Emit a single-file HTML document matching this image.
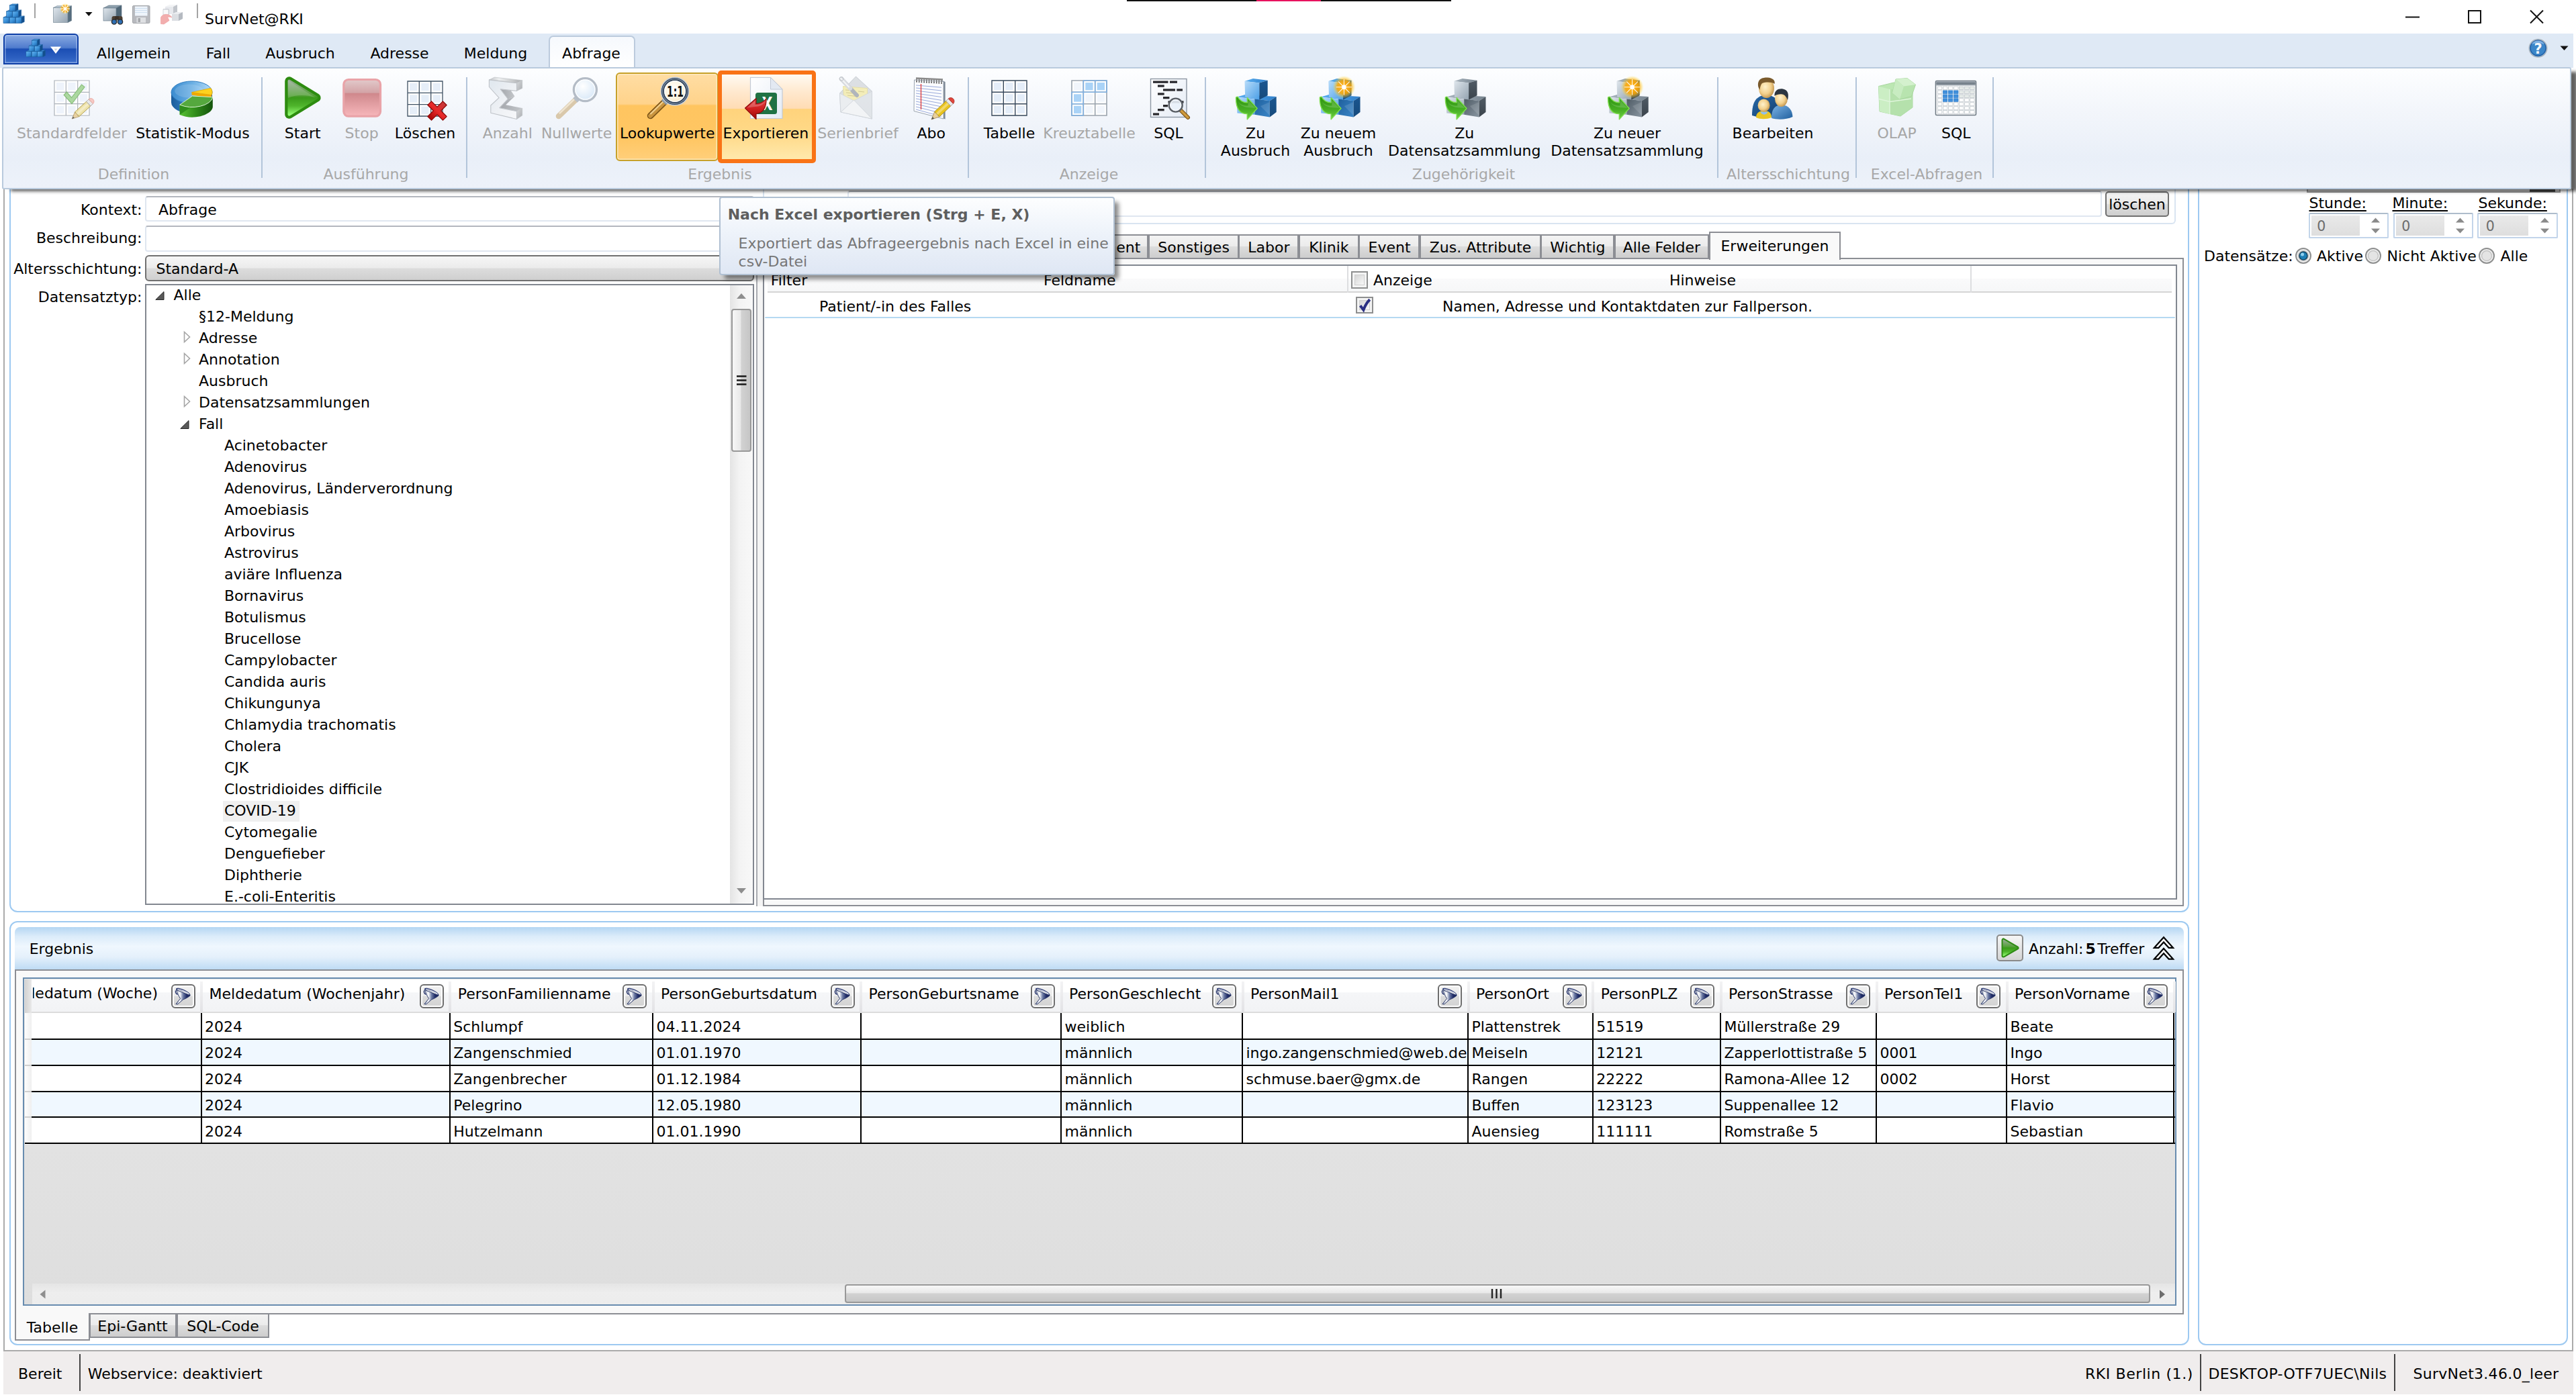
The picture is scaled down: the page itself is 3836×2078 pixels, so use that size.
<!DOCTYPE html>
<html lang="de"><head><meta charset="utf-8"><title>SurvNet@RKI</title>
<style>
html,body{margin:0;padding:0;background:#fff;}
body{width:3836px;height:2078px;position:relative;overflow:hidden;font-family:"DejaVu Sans","Liberation Sans",sans-serif;font-size:22px;color:#000;}
.t{position:absolute;white-space:nowrap;line-height:1;}
div{box-sizing:border-box;}
svg{overflow:visible;}
</style></head><body>
<div style="position:absolute;left:1678.0px;top:0.0px;width:483.0px;height:2.0px;background:#111;"></div>
<div style="position:absolute;left:1871.0px;top:0.0px;width:96.0px;height:2.0px;background:#e8135f;"></div>
<div class="t" style="left:305.0px;top:18.4px;font-size:22px;color:#000;">SurvNet@RKI</div>
<svg style="position:absolute;left:3570.0px;top:5.0px;" width="240" height="40" viewBox="0 0 240 40"><path d="M12 20.5h21" stroke="#111" stroke-width="2" fill="none"/><rect x="106" y="11" width="18" height="18" fill="none" stroke="#111" stroke-width="2"/><path d="M198 10.5l19 19M217 10.5l-19 19" stroke="#111" stroke-width="2" fill="none"/></svg>
<div style="position:absolute;left:5.0px;top:281.0px;width:2.0px;height:1733.0px;background:#ababab;"></div>
<div style="position:absolute;left:3830.0px;top:281.0px;width:2.0px;height:1733.0px;background:#ababab;"></div>
<div style="position:absolute;left:14.0px;top:240.0px;width:3246.0px;height:1118.5px;border:2px solid #9dc9f1;border-radius:12px;background:#fff;"></div>
<div style="position:absolute;left:3273.0px;top:240.0px;width:551.0px;height:1764.0px;border:2px solid #9dc9f1;border-radius:12px;background:#fff;"></div>
<div style="position:absolute;left:14.0px;top:1372.0px;width:3246.0px;height:632.0px;border:2px solid #9dc9f1;border-radius:12px;background:#fff;"></div>
<div class="t" style="left:211.5px;top:302.4px;font-size:22px;color:#000;transform:translateX(-100%);">Kontext:</div>
<div class="t" style="left:211.5px;top:344.0px;font-size:22px;color:#000;transform:translateX(-100%);">Beschreibung:</div>
<div class="t" style="left:211.5px;top:390.0px;font-size:22px;color:#000;transform:translateX(-100%);">Altersschichtung:</div>
<div class="t" style="left:211.5px;top:432.2px;font-size:22px;color:#000;transform:translateX(-100%);">Datensatztyp:</div>
<div style="position:absolute;left:216.0px;top:291.5px;width:907.0px;height:38.5px;border:2px solid #dfe6f0;border-top-color:#b3b7be;border-radius:4px;background:#fff;"></div>
<div class="t" style="left:236.0px;top:302.4px;font-size:22px;color:#000;">Abfrage</div>
<div style="position:absolute;left:216.0px;top:336.0px;width:907.0px;height:38.5px;border:2px solid #dfe6f0;border-top-color:#b3b7be;border-radius:4px;background:#fff;"></div>
<div style="position:absolute;left:216.0px;top:379.5px;width:907.0px;height:39.5px;border:2px solid #707070;border-radius:6px;background:linear-gradient(#f6f6f6 0%,#ebebeb 48%,#dcdcdc 52%,#cfcfcf 100%);"></div>
<div class="t" style="left:232.5px;top:390.0px;font-size:22px;color:#000;">Standard-A</div>
<div style="position:absolute;left:216.0px;top:423.0px;width:907.0px;height:925.0px;border:2px solid #828790;background:#fff;"></div>
<div style="position:absolute;left:1087.0px;top:425.0px;width:34.0px;height:921.0px;background:linear-gradient(90deg,#e4e4e4,#f3f3f3 40%,#f8f8f8);"></div>
<svg style="position:absolute;left:1087.0px;top:425.0px;" width="34" height="921" viewBox="0 0 34 921"><path d="M10 20l7-8 7 8z" fill="#8e8e8e"/><path d="M10 898l7 8 7-8z" fill="#8e8e8e"/></svg>
<div style="position:absolute;left:1089.0px;top:459.5px;width:30.0px;height:213.5px;border:2px solid #989898;border-radius:4px;background:linear-gradient(90deg,#f7f7f7 0%,#e9e9e9 45%,#d2d2d2 50%,#c6c6c6 100%);"></div>
<svg style="position:absolute;left:1096.0px;top:557.0px;" width="16" height="18" viewBox="0 0 16 18"><path d="M1 3.5h14.500M1 9.500h14.500M1 15.500h14.500" stroke="#1a1a1a" stroke-width="2.400"/></svg>
<div class="t" style="left:258.5px;top:428.7px;font-size:22px;color:#000;">Alle</div>
<svg style="position:absolute;left:230.5px;top:434.3px;" width="14" height="13" viewBox="0 0 14 13"><path d="M13 0.5v12H0.8z" fill="#595959" stroke="#262626" stroke-width="1"/></svg>
<div class="t" style="left:296.0px;top:460.7px;font-size:22px;color:#000;">§12-Meldung</div>
<div class="t" style="left:296.0px;top:492.7px;font-size:22px;color:#000;">Adresse</div>
<svg style="position:absolute;left:273.0px;top:493.3px;" width="12" height="18" viewBox="0 0 12 18"><path d="M1.5 1.5l8 7.5-8 7.5z" fill="#fff" stroke="#a5a5a5" stroke-width="1.6"/></svg>
<div class="t" style="left:296.0px;top:524.7px;font-size:22px;color:#000;">Annotation</div>
<svg style="position:absolute;left:273.0px;top:525.3px;" width="12" height="18" viewBox="0 0 12 18"><path d="M1.5 1.5l8 7.5-8 7.5z" fill="#fff" stroke="#a5a5a5" stroke-width="1.6"/></svg>
<div class="t" style="left:296.0px;top:556.7px;font-size:22px;color:#000;">Ausbruch</div>
<div class="t" style="left:296.0px;top:588.7px;font-size:22px;color:#000;">Datensatzsammlungen</div>
<svg style="position:absolute;left:273.0px;top:589.3px;" width="12" height="18" viewBox="0 0 12 18"><path d="M1.5 1.5l8 7.5-8 7.5z" fill="#fff" stroke="#a5a5a5" stroke-width="1.6"/></svg>
<div class="t" style="left:296.0px;top:620.7px;font-size:22px;color:#000;">Fall</div>
<svg style="position:absolute;left:268.0px;top:626.3px;" width="14" height="13" viewBox="0 0 14 13"><path d="M13 0.5v12H0.8z" fill="#595959" stroke="#262626" stroke-width="1"/></svg>
<div class="t" style="left:334.0px;top:652.7px;font-size:22px;color:#000;">Acinetobacter</div>
<div class="t" style="left:334.0px;top:684.7px;font-size:22px;color:#000;">Adenovirus</div>
<div class="t" style="left:334.0px;top:716.7px;font-size:22px;color:#000;">Adenovirus, Länderverordnung</div>
<div class="t" style="left:334.0px;top:748.7px;font-size:22px;color:#000;">Amoebiasis</div>
<div class="t" style="left:334.0px;top:780.7px;font-size:22px;color:#000;">Arbovirus</div>
<div class="t" style="left:334.0px;top:812.7px;font-size:22px;color:#000;">Astrovirus</div>
<div class="t" style="left:334.0px;top:844.7px;font-size:22px;color:#000;">aviäre Influenza</div>
<div class="t" style="left:334.0px;top:876.7px;font-size:22px;color:#000;">Bornavirus</div>
<div class="t" style="left:334.0px;top:908.7px;font-size:22px;color:#000;">Botulismus</div>
<div class="t" style="left:334.0px;top:940.7px;font-size:22px;color:#000;">Brucellose</div>
<div class="t" style="left:334.0px;top:972.7px;font-size:22px;color:#000;">Campylobacter</div>
<div class="t" style="left:334.0px;top:1004.7px;font-size:22px;color:#000;">Candida auris</div>
<div class="t" style="left:334.0px;top:1036.7px;font-size:22px;color:#000;">Chikungunya</div>
<div class="t" style="left:334.0px;top:1068.7px;font-size:22px;color:#000;">Chlamydia trachomatis</div>
<div class="t" style="left:334.0px;top:1100.7px;font-size:22px;color:#000;">Cholera</div>
<div class="t" style="left:334.0px;top:1132.7px;font-size:22px;color:#000;">CJK</div>
<div class="t" style="left:334.0px;top:1164.7px;font-size:22px;color:#000;">Clostridioides difficile</div>
<div style="position:absolute;left:332.0px;top:1193.3px;width:114.0px;height:31.0px;background:#f0f0f0;"></div>
<div class="t" style="left:334.0px;top:1196.7px;font-size:22px;color:#000;">COVID-19</div>
<div class="t" style="left:334.0px;top:1228.7px;font-size:22px;color:#000;">Cytomegalie</div>
<div class="t" style="left:334.0px;top:1260.7px;font-size:22px;color:#000;">Denguefieber</div>
<div class="t" style="left:334.0px;top:1292.7px;font-size:22px;color:#000;">Diphtherie</div>
<div class="t" style="left:334.0px;top:1324.7px;font-size:22px;color:#000;">E.-coli-Enteritis</div>
<div style="position:absolute;left:218.0px;top:1346.0px;width:869.0px;height:2.0px;background:#828790;"></div>
<div style="position:absolute;left:216.0px;top:1348.0px;width:907.0px;height:6.0px;background:#fff;"></div>
<div style="position:absolute;left:1126.0px;top:300.0px;width:2.0px;height:1050.0px;background:#a9abb0;"></div>
<div style="position:absolute;left:1128.0px;top:300.0px;width:8.0px;height:1050.0px;background:#f4f4f4;"></div>
<div style="position:absolute;left:1136.0px;top:281.0px;width:2104.0px;height:52.5px;border:2px solid #d9e4f1;border-top:none;border-radius:0 0 6px 6px;background:#fff;"></div>
<div style="position:absolute;left:1262.0px;top:284.0px;width:1868.0px;height:38.5px;border:2px solid #dfe6f0;border-top-color:#b3b7be;border-radius:4px;background:#fff;"></div>
<div style="position:absolute;left:3135.0px;top:285.0px;width:95.0px;height:37.5px;border:2px solid #707070;border-radius:5px;background:linear-gradient(#f3f3f3 0%,#ebebeb 48%,#dddddd 52%,#cfcfcf 100%);"></div>
<div class="t" style="left:3182.5px;top:294.4px;font-size:22px;color:#000;transform:translateX(-50%);">löschen</div>
<div style="position:absolute;left:1136.0px;top:383.5px;width:2116.0px;height:966.5px;border:2px solid #8c8e94;background:#f9f9f9;"></div>
<div style="position:absolute;left:1599.2px;top:349.0px;width:111.3px;height:36.5px;border:2px solid #8c8e94;background:linear-gradient(#f3f3f3 0%,#ebebeb 50%,#dddddd 50%,#cdcdcd 100%);"></div>
<div class="t" style="left:1698.3px;top:358.4px;font-size:22px;color:#000;transform:translateX(-100%);">ent</div>
<div style="position:absolute;left:1710.0px;top:349.0px;width:134.7px;height:36.5px;border:2px solid #8c8e94;background:linear-gradient(#f3f3f3 0%,#ebebeb 50%,#dddddd 50%,#cdcdcd 100%);"></div>
<div class="t" style="left:1777.6px;top:358.4px;font-size:22px;color:#000;transform:translateX(-50%);">Sonstiges</div>
<div style="position:absolute;left:1844.2px;top:349.0px;width:89.9px;height:36.5px;border:2px solid #8c8e94;background:linear-gradient(#f3f3f3 0%,#ebebeb 50%,#dddddd 50%,#cdcdcd 100%);"></div>
<div class="t" style="left:1889.4px;top:358.4px;font-size:22px;color:#000;transform:translateX(-50%);">Labor</div>
<div style="position:absolute;left:1933.6px;top:349.0px;width:90.1px;height:36.5px;border:2px solid #8c8e94;background:linear-gradient(#f3f3f3 0%,#ebebeb 50%,#dddddd 50%,#cdcdcd 100%);"></div>
<div class="t" style="left:1978.9px;top:358.4px;font-size:22px;color:#000;transform:translateX(-50%);">Klinik</div>
<div style="position:absolute;left:2023.2px;top:349.0px;width:91.3px;height:36.5px;border:2px solid #8c8e94;background:linear-gradient(#f3f3f3 0%,#ebebeb 50%,#dddddd 50%,#cdcdcd 100%);"></div>
<div class="t" style="left:2069.1px;top:358.4px;font-size:22px;color:#000;transform:translateX(-50%);">Event</div>
<div style="position:absolute;left:2114.0px;top:349.0px;width:180.7px;height:36.5px;border:2px solid #8c8e94;background:linear-gradient(#f3f3f3 0%,#ebebeb 50%,#dddddd 50%,#cdcdcd 100%);"></div>
<div class="t" style="left:2204.6px;top:358.4px;font-size:22px;color:#000;transform:translateX(-50%);">Zus. Attribute</div>
<div style="position:absolute;left:2294.2px;top:349.0px;width:110.0px;height:36.5px;border:2px solid #8c8e94;background:linear-gradient(#f3f3f3 0%,#ebebeb 50%,#dddddd 50%,#cdcdcd 100%);"></div>
<div class="t" style="left:2349.4px;top:358.4px;font-size:22px;color:#000;transform:translateX(-50%);">Wichtig</div>
<div style="position:absolute;left:2403.7px;top:349.0px;width:141.0px;height:36.5px;border:2px solid #8c8e94;background:linear-gradient(#f3f3f3 0%,#ebebeb 50%,#dddddd 50%,#cdcdcd 100%);"></div>
<div class="t" style="left:2474.4px;top:358.4px;font-size:22px;color:#000;transform:translateX(-50%);">Alle Felder</div>
<div style="position:absolute;left:2545.0px;top:344.5px;width:196.0px;height:42.0px;border:2px solid #8c8e94;border-bottom:none;background:#f9f9f9;"></div>
<div class="t" style="left:2643.0px;top:356.4px;font-size:22px;color:#000;transform:translateX(-50%);">Erweiterungen</div>
<div style="position:absolute;left:1136.0px;top:394.0px;width:2106.0px;height:946.0px;border:2px solid #828790;background:#fff;"></div>
<div style="position:absolute;left:1143.0px;top:396.0px;width:2091.0px;height:40.0px;background:linear-gradient(#ffffff 0%,#ffffff 50%,#fafafb 51%,#f6f7f8 100%);border-bottom:2px solid #d5d5d5;"></div>
<div style="position:absolute;left:2006.0px;top:396.0px;width:2.0px;height:40.0px;background:#dddee0;"></div>
<div style="position:absolute;left:2934.0px;top:396.0px;width:2.0px;height:40.0px;background:#dddee0;"></div>
<div class="t" style="left:1147.7px;top:406.9px;font-size:22px;color:#000;">Filter</div>
<div class="t" style="left:1554.0px;top:406.9px;font-size:22px;color:#000;">Feldname</div>
<div class="t" style="left:2045.0px;top:406.9px;font-size:22px;color:#000;">Anzeige</div>
<div class="t" style="left:2535.5px;top:406.9px;font-size:22px;color:#000;transform:translateX(-50%);">Hinweise</div>
<div style="position:absolute;left:2011.5px;top:404.0px;width:25.5px;height:25.5px;border:2px solid #8e8f8f;background:#f4f4f4;"><div style="position:absolute;left:3px;top:3px;right:3px;bottom:3px;border:1.5px solid #cfcfcf;background:linear-gradient(135deg,#d6d6d6,#f8f8f8);"></div></div>
<div class="t" style="left:1220.0px;top:445.9px;font-size:22px;color:#000;">Patient/-in des Falles</div>
<div style="position:absolute;left:2019.0px;top:441.5px;width:25.5px;height:25.5px;border:2px solid #8e8f8f;background:#f4f4f4;"><div style="position:absolute;left:3px;top:3px;right:3px;bottom:3px;border:1.5px solid #cfcfcf;background:linear-gradient(135deg,#d6d6d6,#f8f8f8);"></div></div>
<svg style="position:absolute;left:2019.0px;top:441.5px;" width="26" height="26" viewBox="0 0 26 26"><path d="M6.600 13.200l4.800 6.400C14 12.500 17 8 20.800 4.300" fill="none" stroke="#2a2f83" stroke-width="4" stroke-linejoin="miter"/></svg>
<div class="t" style="left:2148.0px;top:445.9px;font-size:22px;color:#000;">Namen, Adresse und Kontaktdaten zur Fallperson.</div>
<div style="position:absolute;left:1139.0px;top:471.5px;width:2100.0px;height:2.0px;background:#b5d9f2;border-radius:2px;"></div>
<div style="position:absolute;left:3434.5px;top:262.0px;width:378.0px;height:24.5px;background:#d6d6d6;border:2px solid #9a9a9a;"></div>
<div style="position:absolute;left:3766.5px;top:270.0px;width:38.0px;height:15.5px;background:#484848;"></div>
<div class="t" style="left:3438.5px;top:291.9px;font-size:22px;color:#000;text-decoration:underline;text-decoration-thickness:1.6px;text-underline-offset:2.5px;">Stunde:</div>
<div class="t" style="left:3562.5px;top:291.9px;font-size:22px;color:#000;text-decoration:underline;text-decoration-thickness:1.6px;text-underline-offset:2.5px;">Minute:</div>
<div class="t" style="left:3690.5px;top:291.9px;font-size:22px;color:#000;text-decoration:underline;text-decoration-thickness:1.6px;text-underline-offset:2.5px;">Sekunde:</div>
<div style="position:absolute;left:3437.8px;top:316.5px;width:119.6px;height:38.0px;border:2px solid #c3d5ea;border-top-color:#aebccc;background:#fff;border-radius:2px;"></div>
<div style="position:absolute;left:3441.8px;top:320.5px;width:72.0px;height:30.0px;background:linear-gradient(#e9e9e9,#dedede);"></div>
<div class="t" style="left:3450.3px;top:327.2px;font-size:20.5px;color:#6d6d6d;">0</div>
<svg style="position:absolute;left:3529.3px;top:322.0px;" width="18" height="28" viewBox="0 0 18 28"><path d="M2 9.5l6.5-7 6.5 7z" fill="#8a8a8a"/><path d="M2 18.5l6.5 7 6.5-7z" fill="#8a8a8a"/></svg>
<div style="position:absolute;left:3563.7px;top:316.5px;width:119.6px;height:38.0px;border:2px solid #c3d5ea;border-top-color:#aebccc;background:#fff;border-radius:2px;"></div>
<div style="position:absolute;left:3567.7px;top:320.5px;width:72.0px;height:30.0px;background:linear-gradient(#e9e9e9,#dedede);"></div>
<div class="t" style="left:3576.2px;top:327.2px;font-size:20.5px;color:#6d6d6d;">0</div>
<svg style="position:absolute;left:3655.2px;top:322.0px;" width="18" height="28" viewBox="0 0 18 28"><path d="M2 9.5l6.5-7 6.5 7z" fill="#8a8a8a"/><path d="M2 18.5l6.5 7 6.5-7z" fill="#8a8a8a"/></svg>
<div style="position:absolute;left:3689.3px;top:316.5px;width:119.6px;height:38.0px;border:2px solid #c3d5ea;border-top-color:#aebccc;background:#fff;border-radius:2px;"></div>
<div style="position:absolute;left:3693.3px;top:320.5px;width:72.0px;height:30.0px;background:linear-gradient(#e9e9e9,#dedede);"></div>
<div class="t" style="left:3701.8px;top:327.2px;font-size:20.5px;color:#6d6d6d;">0</div>
<svg style="position:absolute;left:3780.8px;top:322.0px;" width="18" height="28" viewBox="0 0 18 28"><path d="M2 9.5l6.5-7 6.5 7z" fill="#8a8a8a"/><path d="M2 18.5l6.5 7 6.5-7z" fill="#8a8a8a"/></svg>
<div class="t" style="left:3282.0px;top:371.4px;font-size:22px;color:#000;">Datensätze:</div>
<svg style="position:absolute;left:3416.5px;top:367.5px;" width="26" height="26" viewBox="0 0 26 26"><circle cx="13" cy="13" r="11" fill="#f1f1f1" stroke="#8e8f8f" stroke-width="2"/><circle cx="13" cy="13" r="7.5" fill="#e4e4e4" stroke="#c5c5c5" stroke-width="1.5"/><circle cx="13" cy="13" r="6" fill="#1e7fb5" stroke="#12425e" stroke-width="1.5"/><circle cx="11.5" cy="11" r="2.5" fill="#8fd0ef"/></svg>
<div class="t" style="left:3450.0px;top:371.4px;font-size:22px;color:#000;">Aktive</div>
<svg style="position:absolute;left:3520.5px;top:367.5px;" width="26" height="26" viewBox="0 0 26 26"><circle cx="13" cy="13" r="11" fill="#f1f1f1" stroke="#8e8f8f" stroke-width="2"/><circle cx="13" cy="13" r="7.5" fill="#e4e4e4" stroke="#c5c5c5" stroke-width="1.5"/></svg>
<div class="t" style="left:3554.5px;top:371.4px;font-size:22px;color:#000;">Nicht Aktive</div>
<svg style="position:absolute;left:3690.0px;top:367.5px;" width="26" height="26" viewBox="0 0 26 26"><circle cx="13" cy="13" r="11" fill="#f1f1f1" stroke="#8e8f8f" stroke-width="2"/><circle cx="13" cy="13" r="7.5" fill="#e4e4e4" stroke="#c5c5c5" stroke-width="1.5"/></svg>
<div class="t" style="left:3723.5px;top:371.4px;font-size:22px;color:#000;">Alle</div>
<div style="position:absolute;left:22.0px;top:1380.5px;width:3230.0px;height:64.0px;border-radius:8px 8px 0 0;background:linear-gradient(#b4d6f3 0%,#dcecfa 22%,#eff7fe 45%,#e4f0fb 70%,#bcdaf4 100%);"></div>
<div class="t" style="left:43.7px;top:1403.1px;font-size:22px;color:#000;">Ergebnis</div>
<div style="position:absolute;left:2973.0px;top:1392.0px;width:39.5px;height:39.5px;border:2px solid #8a8a8a;border-radius:5px;background:linear-gradient(#f6f6f6,#d4d4d4);"></div>
<svg style="position:absolute;left:2973.0px;top:1392.0px;" width="40" height="40" viewBox="0 0 40 40"><defs><linearGradient id="gp" x1="0" y1="0" x2="0" y2="1"><stop offset="0" stop-color="#4aa52f"/><stop offset="1" stop-color="#7ee04f"/></linearGradient></defs><path d="M10.500 8.500v23L30.500 20z" fill="#2e8a14" stroke="#2e8a14" stroke-width="6" stroke-linejoin="round"/><path d="M10.500 8.500v23L30.500 20z" fill="url(#gStart)" stroke="url(#gStart)" stroke-width="2" stroke-linejoin="round"/></svg>
<div class="t" style="left:3021.0px;top:1403.1px;font-size:22px;color:#000;">Anzahl:<b style="margin:0 2.5px 0 3px">5</b>Treffer</div>
<svg style="position:absolute;left:3200.0px;top:1390.0px;" width="44" height="44" viewBox="0 0 44 44"><path d="M8 21.800L22 6.200L36 21.800H29.600L22 13.400L14.400 21.800zM8 38.600L22 23L36 38.600H29.600L22 30.200L14.400 38.600z" fill="#fff" stroke="#000" stroke-width="2.200" stroke-linejoin="miter"/></svg>
<div style="position:absolute;left:22.0px;top:1444.0px;width:3230.0px;height:513.5px;border:2px solid #8c8e94;background:#f9f9f9;"></div>
<div style="position:absolute;left:34.0px;top:1456.0px;width:3206.5px;height:489.0px;border:2px solid #688caf;background:linear-gradient(#e6e6e6,#dedede);"></div>
<div style="position:absolute;left:36.5px;top:1458.5px;width:3202.0px;height:50.0px;background:linear-gradient(#ffffff 0%,#ffffff 38%,#f5f6f8 42%,#f2f3f5 100%);border-bottom:2px solid #dcdcdc;"></div>
<div style="position:absolute;left:36.5px;top:1508.7px;width:3202.0px;height:38.8px;background:#fff;"></div>
<div style="position:absolute;left:36.5px;top:1547.5px;width:3202.0px;height:39.0px;background:#f0f8ff;"></div>
<div style="position:absolute;left:36.5px;top:1586.5px;width:3202.0px;height:39.0px;background:#fff;"></div>
<div style="position:absolute;left:36.5px;top:1625.5px;width:3202.0px;height:38.7px;background:#f0f8ff;"></div>
<div style="position:absolute;left:36.5px;top:1664.2px;width:3202.0px;height:38.8px;background:#fff;"></div>
<div style="position:absolute;left:36.5px;top:1458.5px;width:10.5px;height:246.0px;background:linear-gradient(90deg,#fdfdfd,#efefef);"></div>
<div style="position:absolute;left:36.5px;top:1458.5px;width:10.5px;height:50.0px;background:linear-gradient(90deg,#d2d2d2,#e8e8e8);"></div>
<div style="position:absolute;left:36.5px;top:1546.5px;width:3202.0px;height:2.3px;background:#000;"></div>
<div style="position:absolute;left:36.5px;top:1585.5px;width:3202.0px;height:2.3px;background:#000;"></div>
<div style="position:absolute;left:36.5px;top:1624.5px;width:3202.0px;height:2.3px;background:#000;"></div>
<div style="position:absolute;left:36.5px;top:1663.2px;width:3202.0px;height:2.3px;background:#000;"></div>
<div style="position:absolute;left:36.5px;top:1702.0px;width:3202.0px;height:2.3px;background:#000;"></div>
<div style="position:absolute;left:36.5px;top:1546.5px;width:10.5px;height:2.3px;background:#cfcfcf;"></div>
<div style="position:absolute;left:36.5px;top:1585.5px;width:10.5px;height:2.3px;background:#cfcfcf;"></div>
<div style="position:absolute;left:36.5px;top:1624.5px;width:10.5px;height:2.3px;background:#cfcfcf;"></div>
<div style="position:absolute;left:36.5px;top:1663.2px;width:10.5px;height:2.3px;background:#cfcfcf;"></div>
<div style="position:absolute;left:298.6px;top:1508.7px;width:2.3px;height:195.3px;background:#000;"></div>
<div style="position:absolute;left:298.1px;top:1462.0px;width:4.0px;height:46.0px;background:linear-gradient(#f3f3f4,#e2e2e5);"></div>
<div style="position:absolute;left:668.8px;top:1508.7px;width:2.3px;height:195.3px;background:#000;"></div>
<div style="position:absolute;left:668.3px;top:1462.0px;width:4.0px;height:46.0px;background:linear-gradient(#f3f3f4,#e2e2e5);"></div>
<div style="position:absolute;left:971.0px;top:1508.7px;width:2.3px;height:195.3px;background:#000;"></div>
<div style="position:absolute;left:970.5px;top:1462.0px;width:4.0px;height:46.0px;background:linear-gradient(#f3f3f4,#e2e2e5);"></div>
<div style="position:absolute;left:1280.5px;top:1508.7px;width:2.3px;height:195.3px;background:#000;"></div>
<div style="position:absolute;left:1280.0px;top:1462.0px;width:4.0px;height:46.0px;background:linear-gradient(#f3f3f4,#e2e2e5);"></div>
<div style="position:absolute;left:1579.0px;top:1508.7px;width:2.3px;height:195.3px;background:#000;"></div>
<div style="position:absolute;left:1578.5px;top:1462.0px;width:4.0px;height:46.0px;background:linear-gradient(#f3f3f4,#e2e2e5);"></div>
<div style="position:absolute;left:1849.0px;top:1508.7px;width:2.3px;height:195.3px;background:#000;"></div>
<div style="position:absolute;left:1848.5px;top:1462.0px;width:4.0px;height:46.0px;background:linear-gradient(#f3f3f4,#e2e2e5);"></div>
<div style="position:absolute;left:2185.0px;top:1508.7px;width:2.3px;height:195.3px;background:#000;"></div>
<div style="position:absolute;left:2184.5px;top:1462.0px;width:4.0px;height:46.0px;background:linear-gradient(#f3f3f4,#e2e2e5);"></div>
<div style="position:absolute;left:2370.7px;top:1508.7px;width:2.3px;height:195.3px;background:#000;"></div>
<div style="position:absolute;left:2370.2px;top:1462.0px;width:4.0px;height:46.0px;background:linear-gradient(#f3f3f4,#e2e2e5);"></div>
<div style="position:absolute;left:2561.0px;top:1508.7px;width:2.3px;height:195.3px;background:#000;"></div>
<div style="position:absolute;left:2560.5px;top:1462.0px;width:4.0px;height:46.0px;background:linear-gradient(#f3f3f4,#e2e2e5);"></div>
<div style="position:absolute;left:2793.0px;top:1508.7px;width:2.3px;height:195.3px;background:#000;"></div>
<div style="position:absolute;left:2792.5px;top:1462.0px;width:4.0px;height:46.0px;background:linear-gradient(#f3f3f4,#e2e2e5);"></div>
<div style="position:absolute;left:2987.0px;top:1508.7px;width:2.3px;height:195.3px;background:#000;"></div>
<div style="position:absolute;left:2986.5px;top:1462.0px;width:4.0px;height:46.0px;background:linear-gradient(#f3f3f4,#e2e2e5);"></div>
<div style="position:absolute;left:3236.0px;top:1508.7px;width:2.3px;height:195.3px;background:#000;"></div>
<div style="position:absolute;left:3235.5px;top:1462.0px;width:4.0px;height:46.0px;background:linear-gradient(#f3f3f4,#e2e2e5);"></div>
<svg width="0" height="0" style="position:absolute"><defs><linearGradient id="fg" x1="0" y1="0" x2="1" y2="0"><stop offset="0" stop-color="#9aa5c0"/><stop offset=".28" stop-color="#ffffff"/><stop offset=".5" stop-color="#6f7da6"/><stop offset=".75" stop-color="#1f2b66"/><stop offset="1" stop-color="#1c2860"/></linearGradient><linearGradient id="fr" x1="0" y1="0" x2="1" y2="1"><stop offset="0" stop-color="#eef1f7"/><stop offset="1" stop-color="#7f8db4"/></linearGradient></defs></svg>
<div style="position:absolute;left:48.600px;top:1462px;width:198.900px;height:44px;overflow:hidden;"><div class="t" style="right:12.500px;top:7.2px;font-size:22px;">Meldedatum (Woche)</div></div>
<div style="position:absolute;left:254.6px;top:1466.0px;width:36.0px;height:36.0px;border:2px solid #6f6f6f;border-radius:6px;background:linear-gradient(#f1f1f1 0%,#ebebeb 49%,#dbdbdb 50%,#d3d3d3 100%);box-shadow:inset 0 0 0 2px #fff;"></div>
<svg style="position:absolute;left:254.6px;top:1466.0px;" width="36" height="36" viewBox="0 0 36 36"><path d="M7.300 8.600C9 14 11.500 18 13.500 21.500L7 29.600L9.600 29.900L17.800 22.800C22 21.500 26 19 28.300 16.800Z" fill="url(#fg)" stroke="#1d2a5e" stroke-width=".9" stroke-linejoin="round"/><path d="M7.400 8.300C5.500 5.500 10 4.800 17 7.600C24 10.400 29.500 14.500 28.300 16.800C23 12 14 8.800 7.400 8.300Z" fill="#26346e"/><path d="M9.500 7.400C14 8 22 11 26.600 14.800" stroke="#e8ecf5" stroke-width="1.300" fill="none"/><path d="M6.500 9.500C6 12 7.500 14.500 9.500 15.500" stroke="#26346e" stroke-width="1.200" fill="none"/></svg>
<div class="t" style="left:311.6px;top:1470.2px;font-size:22px;color:#000;">Meldedatum (Wochenjahr)</div>
<div style="position:absolute;left:624.8px;top:1466.0px;width:36.0px;height:36.0px;border:2px solid #6f6f6f;border-radius:6px;background:linear-gradient(#f1f1f1 0%,#ebebeb 49%,#dbdbdb 50%,#d3d3d3 100%);box-shadow:inset 0 0 0 2px #fff;"></div>
<svg style="position:absolute;left:624.8px;top:1466.0px;" width="36" height="36" viewBox="0 0 36 36"><path d="M7.300 8.600C9 14 11.500 18 13.500 21.500L7 29.600L9.600 29.900L17.800 22.800C22 21.500 26 19 28.300 16.800Z" fill="url(#fg)" stroke="#1d2a5e" stroke-width=".9" stroke-linejoin="round"/><path d="M7.400 8.300C5.500 5.500 10 4.800 17 7.600C24 10.400 29.500 14.500 28.300 16.800C23 12 14 8.800 7.400 8.300Z" fill="#26346e"/><path d="M9.500 7.400C14 8 22 11 26.600 14.800" stroke="#e8ecf5" stroke-width="1.300" fill="none"/><path d="M6.500 9.500C6 12 7.500 14.500 9.500 15.500" stroke="#26346e" stroke-width="1.200" fill="none"/></svg>
<div class="t" style="left:681.8px;top:1470.2px;font-size:22px;color:#000;">PersonFamilienname</div>
<div style="position:absolute;left:927.0px;top:1466.0px;width:36.0px;height:36.0px;border:2px solid #6f6f6f;border-radius:6px;background:linear-gradient(#f1f1f1 0%,#ebebeb 49%,#dbdbdb 50%,#d3d3d3 100%);box-shadow:inset 0 0 0 2px #fff;"></div>
<svg style="position:absolute;left:927.0px;top:1466.0px;" width="36" height="36" viewBox="0 0 36 36"><path d="M7.300 8.600C9 14 11.500 18 13.500 21.500L7 29.600L9.600 29.900L17.800 22.800C22 21.500 26 19 28.300 16.800Z" fill="url(#fg)" stroke="#1d2a5e" stroke-width=".9" stroke-linejoin="round"/><path d="M7.400 8.300C5.500 5.500 10 4.800 17 7.600C24 10.400 29.500 14.500 28.300 16.800C23 12 14 8.800 7.400 8.300Z" fill="#26346e"/><path d="M9.500 7.400C14 8 22 11 26.600 14.800" stroke="#e8ecf5" stroke-width="1.300" fill="none"/><path d="M6.500 9.500C6 12 7.500 14.500 9.500 15.500" stroke="#26346e" stroke-width="1.200" fill="none"/></svg>
<div class="t" style="left:984.0px;top:1470.2px;font-size:22px;color:#000;">PersonGeburtsdatum</div>
<div style="position:absolute;left:1236.5px;top:1466.0px;width:36.0px;height:36.0px;border:2px solid #6f6f6f;border-radius:6px;background:linear-gradient(#f1f1f1 0%,#ebebeb 49%,#dbdbdb 50%,#d3d3d3 100%);box-shadow:inset 0 0 0 2px #fff;"></div>
<svg style="position:absolute;left:1236.5px;top:1466.0px;" width="36" height="36" viewBox="0 0 36 36"><path d="M7.300 8.600C9 14 11.500 18 13.500 21.500L7 29.600L9.600 29.900L17.800 22.800C22 21.500 26 19 28.300 16.800Z" fill="url(#fg)" stroke="#1d2a5e" stroke-width=".9" stroke-linejoin="round"/><path d="M7.400 8.300C5.500 5.500 10 4.800 17 7.600C24 10.400 29.500 14.500 28.300 16.800C23 12 14 8.800 7.400 8.300Z" fill="#26346e"/><path d="M9.500 7.400C14 8 22 11 26.600 14.800" stroke="#e8ecf5" stroke-width="1.300" fill="none"/><path d="M6.500 9.500C6 12 7.500 14.500 9.500 15.500" stroke="#26346e" stroke-width="1.200" fill="none"/></svg>
<div class="t" style="left:1293.5px;top:1470.2px;font-size:22px;color:#000;">PersonGeburtsname</div>
<div style="position:absolute;left:1535.0px;top:1466.0px;width:36.0px;height:36.0px;border:2px solid #6f6f6f;border-radius:6px;background:linear-gradient(#f1f1f1 0%,#ebebeb 49%,#dbdbdb 50%,#d3d3d3 100%);box-shadow:inset 0 0 0 2px #fff;"></div>
<svg style="position:absolute;left:1535.0px;top:1466.0px;" width="36" height="36" viewBox="0 0 36 36"><path d="M7.300 8.600C9 14 11.500 18 13.500 21.500L7 29.600L9.600 29.900L17.800 22.800C22 21.500 26 19 28.300 16.800Z" fill="url(#fg)" stroke="#1d2a5e" stroke-width=".9" stroke-linejoin="round"/><path d="M7.400 8.300C5.500 5.500 10 4.800 17 7.600C24 10.400 29.500 14.500 28.300 16.800C23 12 14 8.800 7.400 8.300Z" fill="#26346e"/><path d="M9.500 7.400C14 8 22 11 26.600 14.800" stroke="#e8ecf5" stroke-width="1.300" fill="none"/><path d="M6.500 9.500C6 12 7.500 14.500 9.500 15.500" stroke="#26346e" stroke-width="1.200" fill="none"/></svg>
<div class="t" style="left:1592.0px;top:1470.2px;font-size:22px;color:#000;">PersonGeschlecht</div>
<div style="position:absolute;left:1805.0px;top:1466.0px;width:36.0px;height:36.0px;border:2px solid #6f6f6f;border-radius:6px;background:linear-gradient(#f1f1f1 0%,#ebebeb 49%,#dbdbdb 50%,#d3d3d3 100%);box-shadow:inset 0 0 0 2px #fff;"></div>
<svg style="position:absolute;left:1805.0px;top:1466.0px;" width="36" height="36" viewBox="0 0 36 36"><path d="M7.300 8.600C9 14 11.500 18 13.500 21.500L7 29.600L9.600 29.900L17.800 22.800C22 21.500 26 19 28.300 16.800Z" fill="url(#fg)" stroke="#1d2a5e" stroke-width=".9" stroke-linejoin="round"/><path d="M7.400 8.300C5.500 5.500 10 4.800 17 7.600C24 10.400 29.500 14.500 28.300 16.800C23 12 14 8.800 7.400 8.300Z" fill="#26346e"/><path d="M9.500 7.400C14 8 22 11 26.600 14.800" stroke="#e8ecf5" stroke-width="1.300" fill="none"/><path d="M6.500 9.500C6 12 7.500 14.500 9.500 15.500" stroke="#26346e" stroke-width="1.200" fill="none"/></svg>
<div class="t" style="left:1862.0px;top:1470.2px;font-size:22px;color:#000;">PersonMail1</div>
<div style="position:absolute;left:2141.0px;top:1466.0px;width:36.0px;height:36.0px;border:2px solid #6f6f6f;border-radius:6px;background:linear-gradient(#f1f1f1 0%,#ebebeb 49%,#dbdbdb 50%,#d3d3d3 100%);box-shadow:inset 0 0 0 2px #fff;"></div>
<svg style="position:absolute;left:2141.0px;top:1466.0px;" width="36" height="36" viewBox="0 0 36 36"><path d="M7.300 8.600C9 14 11.500 18 13.500 21.500L7 29.600L9.600 29.900L17.800 22.800C22 21.500 26 19 28.300 16.800Z" fill="url(#fg)" stroke="#1d2a5e" stroke-width=".9" stroke-linejoin="round"/><path d="M7.400 8.300C5.500 5.500 10 4.800 17 7.600C24 10.400 29.500 14.500 28.300 16.800C23 12 14 8.800 7.400 8.300Z" fill="#26346e"/><path d="M9.500 7.400C14 8 22 11 26.600 14.800" stroke="#e8ecf5" stroke-width="1.300" fill="none"/><path d="M6.500 9.500C6 12 7.500 14.500 9.500 15.500" stroke="#26346e" stroke-width="1.200" fill="none"/></svg>
<div class="t" style="left:2198.0px;top:1470.2px;font-size:22px;color:#000;">PersonOrt</div>
<div style="position:absolute;left:2326.7px;top:1466.0px;width:36.0px;height:36.0px;border:2px solid #6f6f6f;border-radius:6px;background:linear-gradient(#f1f1f1 0%,#ebebeb 49%,#dbdbdb 50%,#d3d3d3 100%);box-shadow:inset 0 0 0 2px #fff;"></div>
<svg style="position:absolute;left:2326.7px;top:1466.0px;" width="36" height="36" viewBox="0 0 36 36"><path d="M7.300 8.600C9 14 11.500 18 13.500 21.500L7 29.600L9.600 29.900L17.800 22.800C22 21.500 26 19 28.300 16.800Z" fill="url(#fg)" stroke="#1d2a5e" stroke-width=".9" stroke-linejoin="round"/><path d="M7.400 8.300C5.500 5.500 10 4.800 17 7.600C24 10.400 29.500 14.500 28.300 16.800C23 12 14 8.800 7.400 8.300Z" fill="#26346e"/><path d="M9.500 7.400C14 8 22 11 26.600 14.800" stroke="#e8ecf5" stroke-width="1.300" fill="none"/><path d="M6.500 9.500C6 12 7.500 14.500 9.500 15.500" stroke="#26346e" stroke-width="1.200" fill="none"/></svg>
<div class="t" style="left:2383.7px;top:1470.2px;font-size:22px;color:#000;">PersonPLZ</div>
<div style="position:absolute;left:2517.0px;top:1466.0px;width:36.0px;height:36.0px;border:2px solid #6f6f6f;border-radius:6px;background:linear-gradient(#f1f1f1 0%,#ebebeb 49%,#dbdbdb 50%,#d3d3d3 100%);box-shadow:inset 0 0 0 2px #fff;"></div>
<svg style="position:absolute;left:2517.0px;top:1466.0px;" width="36" height="36" viewBox="0 0 36 36"><path d="M7.300 8.600C9 14 11.500 18 13.500 21.500L7 29.600L9.600 29.900L17.800 22.800C22 21.500 26 19 28.300 16.800Z" fill="url(#fg)" stroke="#1d2a5e" stroke-width=".9" stroke-linejoin="round"/><path d="M7.400 8.300C5.500 5.500 10 4.800 17 7.600C24 10.400 29.500 14.500 28.300 16.800C23 12 14 8.800 7.400 8.300Z" fill="#26346e"/><path d="M9.500 7.400C14 8 22 11 26.600 14.800" stroke="#e8ecf5" stroke-width="1.300" fill="none"/><path d="M6.500 9.500C6 12 7.500 14.500 9.500 15.500" stroke="#26346e" stroke-width="1.200" fill="none"/></svg>
<div class="t" style="left:2574.0px;top:1470.2px;font-size:22px;color:#000;">PersonStrasse</div>
<div style="position:absolute;left:2749.0px;top:1466.0px;width:36.0px;height:36.0px;border:2px solid #6f6f6f;border-radius:6px;background:linear-gradient(#f1f1f1 0%,#ebebeb 49%,#dbdbdb 50%,#d3d3d3 100%);box-shadow:inset 0 0 0 2px #fff;"></div>
<svg style="position:absolute;left:2749.0px;top:1466.0px;" width="36" height="36" viewBox="0 0 36 36"><path d="M7.300 8.600C9 14 11.500 18 13.500 21.500L7 29.600L9.600 29.900L17.800 22.800C22 21.500 26 19 28.300 16.800Z" fill="url(#fg)" stroke="#1d2a5e" stroke-width=".9" stroke-linejoin="round"/><path d="M7.400 8.300C5.500 5.500 10 4.800 17 7.600C24 10.400 29.500 14.500 28.300 16.800C23 12 14 8.800 7.400 8.300Z" fill="#26346e"/><path d="M9.500 7.400C14 8 22 11 26.600 14.800" stroke="#e8ecf5" stroke-width="1.300" fill="none"/><path d="M6.500 9.500C6 12 7.500 14.500 9.500 15.500" stroke="#26346e" stroke-width="1.200" fill="none"/></svg>
<div class="t" style="left:2806.0px;top:1470.2px;font-size:22px;color:#000;">PersonTel1</div>
<div style="position:absolute;left:2943.0px;top:1466.0px;width:36.0px;height:36.0px;border:2px solid #6f6f6f;border-radius:6px;background:linear-gradient(#f1f1f1 0%,#ebebeb 49%,#dbdbdb 50%,#d3d3d3 100%);box-shadow:inset 0 0 0 2px #fff;"></div>
<svg style="position:absolute;left:2943.0px;top:1466.0px;" width="36" height="36" viewBox="0 0 36 36"><path d="M7.300 8.600C9 14 11.500 18 13.500 21.500L7 29.600L9.600 29.900L17.800 22.800C22 21.500 26 19 28.300 16.800Z" fill="url(#fg)" stroke="#1d2a5e" stroke-width=".9" stroke-linejoin="round"/><path d="M7.400 8.300C5.500 5.500 10 4.800 17 7.600C24 10.400 29.500 14.500 28.300 16.800C23 12 14 8.800 7.400 8.300Z" fill="#26346e"/><path d="M9.500 7.400C14 8 22 11 26.600 14.800" stroke="#e8ecf5" stroke-width="1.300" fill="none"/><path d="M6.500 9.500C6 12 7.500 14.500 9.500 15.500" stroke="#26346e" stroke-width="1.200" fill="none"/></svg>
<div class="t" style="left:3000.0px;top:1470.2px;font-size:22px;color:#000;">PersonVorname</div>
<div style="position:absolute;left:3192.0px;top:1466.0px;width:36.0px;height:36.0px;border:2px solid #6f6f6f;border-radius:6px;background:linear-gradient(#f1f1f1 0%,#ebebeb 49%,#dbdbdb 50%,#d3d3d3 100%);box-shadow:inset 0 0 0 2px #fff;"></div>
<svg style="position:absolute;left:3192.0px;top:1466.0px;" width="36" height="36" viewBox="0 0 36 36"><path d="M7.300 8.600C9 14 11.500 18 13.500 21.500L7 29.600L9.600 29.900L17.800 22.800C22 21.500 26 19 28.300 16.800Z" fill="url(#fg)" stroke="#1d2a5e" stroke-width=".9" stroke-linejoin="round"/><path d="M7.400 8.300C5.500 5.500 10 4.800 17 7.600C24 10.400 29.500 14.500 28.300 16.800C23 12 14 8.800 7.400 8.300Z" fill="#26346e"/><path d="M9.500 7.400C14 8 22 11 26.600 14.800" stroke="#e8ecf5" stroke-width="1.300" fill="none"/><path d="M6.500 9.500C6 12 7.500 14.500 9.500 15.500" stroke="#26346e" stroke-width="1.200" fill="none"/></svg>
<div class="t" style="left:305.1px;top:1519.1px;font-size:22px;color:#000;">2024</div>
<div class="t" style="left:675.3px;top:1519.1px;font-size:22px;color:#000;">Schlumpf</div>
<div class="t" style="left:977.5px;top:1519.1px;font-size:22px;color:#000;">04.11.2024</div>
<div class="t" style="left:1585.5px;top:1519.1px;font-size:22px;color:#000;">weiblich</div>
<div class="t" style="left:2191.5px;top:1519.1px;font-size:22px;color:#000;">Plattenstrek</div>
<div class="t" style="left:2377.2px;top:1519.1px;font-size:22px;color:#000;">51519</div>
<div class="t" style="left:2567.5px;top:1519.1px;font-size:22px;color:#000;">Müllerstraße 29</div>
<div class="t" style="left:2993.5px;top:1519.1px;font-size:22px;color:#000;">Beate</div>
<div class="t" style="left:305.1px;top:1557.9px;font-size:22px;color:#000;">2024</div>
<div class="t" style="left:675.3px;top:1557.9px;font-size:22px;color:#000;">Zangenschmied</div>
<div class="t" style="left:977.5px;top:1557.9px;font-size:22px;color:#000;">01.01.1970</div>
<div class="t" style="left:1585.5px;top:1557.9px;font-size:22px;color:#000;">männlich</div>
<div class="t" style="left:1855.5px;top:1557.9px;font-size:22px;color:#000;">ingo.zangenschmied@web.de</div>
<div class="t" style="left:2191.5px;top:1557.9px;font-size:22px;color:#000;">Meiseln</div>
<div class="t" style="left:2377.2px;top:1557.9px;font-size:22px;color:#000;">12121</div>
<div class="t" style="left:2567.5px;top:1557.9px;font-size:22px;color:#000;">Zapperlottistraße 5</div>
<div class="t" style="left:2799.5px;top:1557.9px;font-size:22px;color:#000;">0001</div>
<div class="t" style="left:2993.5px;top:1557.9px;font-size:22px;color:#000;">Ingo</div>
<div class="t" style="left:305.1px;top:1596.9px;font-size:22px;color:#000;">2024</div>
<div class="t" style="left:675.3px;top:1596.9px;font-size:22px;color:#000;">Zangenbrecher</div>
<div class="t" style="left:977.5px;top:1596.9px;font-size:22px;color:#000;">01.12.1984</div>
<div class="t" style="left:1585.5px;top:1596.9px;font-size:22px;color:#000;">männlich</div>
<div class="t" style="left:1855.5px;top:1596.9px;font-size:22px;color:#000;">schmuse.baer@gmx.de</div>
<div class="t" style="left:2191.5px;top:1596.9px;font-size:22px;color:#000;">Rangen</div>
<div class="t" style="left:2377.2px;top:1596.9px;font-size:22px;color:#000;">22222</div>
<div class="t" style="left:2567.5px;top:1596.9px;font-size:22px;color:#000;">Ramona-Allee 12</div>
<div class="t" style="left:2799.5px;top:1596.9px;font-size:22px;color:#000;">0002</div>
<div class="t" style="left:2993.5px;top:1596.9px;font-size:22px;color:#000;">Horst</div>
<div class="t" style="left:305.1px;top:1635.9px;font-size:22px;color:#000;">2024</div>
<div class="t" style="left:675.3px;top:1635.9px;font-size:22px;color:#000;">Pelegrino</div>
<div class="t" style="left:977.5px;top:1635.9px;font-size:22px;color:#000;">12.05.1980</div>
<div class="t" style="left:1585.5px;top:1635.9px;font-size:22px;color:#000;">männlich</div>
<div class="t" style="left:2191.5px;top:1635.9px;font-size:22px;color:#000;">Buffen</div>
<div class="t" style="left:2377.2px;top:1635.9px;font-size:22px;color:#000;">123123</div>
<div class="t" style="left:2567.5px;top:1635.9px;font-size:22px;color:#000;">Suppenallee 12</div>
<div class="t" style="left:2993.5px;top:1635.9px;font-size:22px;color:#000;">Flavio</div>
<div class="t" style="left:305.1px;top:1674.6px;font-size:22px;color:#000;">2024</div>
<div class="t" style="left:675.3px;top:1674.6px;font-size:22px;color:#000;">Hutzelmann</div>
<div class="t" style="left:977.5px;top:1674.6px;font-size:22px;color:#000;">01.01.1990</div>
<div class="t" style="left:1585.5px;top:1674.6px;font-size:22px;color:#000;">männlich</div>
<div class="t" style="left:2191.5px;top:1674.6px;font-size:22px;color:#000;">Auensieg</div>
<div class="t" style="left:2377.2px;top:1674.6px;font-size:22px;color:#000;">111111</div>
<div class="t" style="left:2567.5px;top:1674.6px;font-size:22px;color:#000;">Romstraße 5</div>
<div class="t" style="left:2993.5px;top:1674.6px;font-size:22px;color:#000;">Sebastian</div>
<div style="position:absolute;left:47.5px;top:1911.5px;width:3191.0px;height:31.5px;background:linear-gradient(#e5e5e5,#eeeeee 45%,#ececec);"></div>
<svg style="position:absolute;left:47.5px;top:1911.5px;" width="40" height="32" viewBox="0 0 40 32"><path d="M19.5 9.5v13l-8-6.5z" fill="#8e8e8e"/></svg>
<svg style="position:absolute;left:3205.0px;top:1911.5px;" width="32" height="32" viewBox="0 0 32 32"><path d="M11 9.5v13l8-6.5z" fill="#6e6e6e"/></svg>
<div style="position:absolute;left:1258.0px;top:1913.0px;width:1944.0px;height:28.0px;border:2px solid #989898;border-radius:4px;background:linear-gradient(#f7f7f7 0%,#e9e9e9 45%,#d2d2d2 50%,#c6c6c6 100%);"></div>
<svg style="position:absolute;left:2219.0px;top:1919.0px;" width="20" height="16" viewBox="0 0 20 16"><path d="M3 1v14M9.5 1v14M16 1v14" stroke="#222" stroke-width="2.4"/></svg>
<div style="position:absolute;left:133.0px;top:1955.5px;width:129.5px;height:37.5px;border:2px solid #8c8e94;background:linear-gradient(#f3f3f3 0%,#ebebeb 50%,#dddddd 50%,#cdcdcd 100%);"></div>
<div class="t" style="left:197.5px;top:1965.4px;font-size:22px;color:#000;transform:translateX(-50%);">Epi-Gantt</div>
<div style="position:absolute;left:263.0px;top:1955.5px;width:138.0px;height:37.5px;border:2px solid #8c8e94;background:linear-gradient(#f3f3f3 0%,#ebebeb 50%,#dddddd 50%,#cdcdcd 100%);"></div>
<div class="t" style="left:332.0px;top:1965.4px;font-size:22px;color:#000;transform:translateX(-50%);">SQL-Code</div>
<div style="position:absolute;left:22.0px;top:1955.5px;width:112.0px;height:41.5px;border:2px solid #8c8e94;border-top:none;background:#f9f9f9;"></div>
<div class="t" style="left:78.0px;top:1967.4px;font-size:22px;color:#000;transform:translateX(-50%);">Tabelle</div>
<div style="position:absolute;left:5.0px;top:2011.0px;width:3827.0px;height:66.0px;background:#f0eded;border-top:2px solid #ababab;"></div>
<div class="t" style="left:27.0px;top:2036.4px;font-size:22px;color:#000;">Bereit</div>
<div style="position:absolute;left:118.0px;top:2017.0px;width:2.0px;height:55.0px;background:#444;"></div>
<div class="t" style="left:130.7px;top:2036.4px;font-size:22px;color:#000;">Webservice: deaktiviert</div>
<div class="t" style="left:3105.0px;top:2036.4px;font-size:22px;color:#000;letter-spacing:0.58px;">RKI Berlin (1.)</div>
<div style="position:absolute;left:3276.0px;top:2017.0px;width:2.0px;height:55.0px;background:#444;"></div>
<div class="t" style="left:3288.4px;top:2036.4px;font-size:22px;color:#000;letter-spacing:0.3px;">DESKTOP-OTF7UEC\Nils</div>
<div style="position:absolute;left:3565.0px;top:2017.0px;width:2.0px;height:55.0px;background:#444;"></div>
<div class="t" style="left:3593.5px;top:2036.4px;font-size:22px;color:#000;letter-spacing:0.28px;">SurvNet3.46.0_leer</div>
<div style="position:absolute;left:0.0px;top:50.0px;width:3832.0px;height:51.0px;background:#dfe9f5;"></div>
<div style="position:absolute;left:5.0px;top:50.0px;width:112.0px;height:46.0px;border:2px solid #0d3ea6;border-radius:6px 6px 0 0;background:linear-gradient(#89aae2 0%,#4f7bcd 46%,#1b4eb4 50%,#2c5fc0 80%,#3d70cc 100%);box-shadow:inset 0 0 0 1.5px rgba(190,210,245,.55);"></div>
<div class="t" style="left:199.0px;top:69.4px;font-size:22px;color:#000;transform:translateX(-50%);">Allgemein</div>
<div class="t" style="left:325.0px;top:69.4px;font-size:22px;color:#000;transform:translateX(-50%);">Fall</div>
<div class="t" style="left:447.0px;top:69.4px;font-size:22px;color:#000;transform:translateX(-50%);">Ausbruch</div>
<div class="t" style="left:595.0px;top:69.4px;font-size:22px;color:#000;transform:translateX(-50%);">Adresse</div>
<div class="t" style="left:738.0px;top:69.4px;font-size:22px;color:#000;transform:translateX(-50%);">Meldung</div>
<div style="position:absolute;left:817.0px;top:52.5px;width:129.0px;height:49.0px;border:2px solid #bccbdd;border-bottom:none;border-radius:7px 7px 0 0;background:linear-gradient(#f6f9fd,#ffffff);"></div>
<div class="t" style="left:880.5px;top:69.4px;font-size:22px;color:#000;transform:translateX(-50%);">Abfrage</div>
<div style="position:absolute;left:3.0px;top:99.5px;width:3826.0px;height:182.5px;border:2px solid #b9cadd;border-radius:3px;background:linear-gradient(#fdfeff 0%,#f3f6fb 35%,#e9eff8 75%,#edf2fa 100%);box-shadow:11px 5px 5px -2px rgba(0,0,0,.62);"></div>
<div style="position:absolute;left:389.0px;top:115.0px;width:2.0px;height:150.0px;background:#b3c5da;"></div>
<div style="position:absolute;left:693.7px;top:115.0px;width:2.0px;height:150.0px;background:#b3c5da;"></div>
<div style="position:absolute;left:1440.8px;top:115.0px;width:2.0px;height:150.0px;background:#b3c5da;"></div>
<div style="position:absolute;left:1793.8px;top:115.0px;width:2.0px;height:150.0px;background:#b3c5da;"></div>
<div style="position:absolute;left:2556.5px;top:115.0px;width:2.0px;height:150.0px;background:#b3c5da;"></div>
<div style="position:absolute;left:2762.5px;top:115.0px;width:2.0px;height:150.0px;background:#b3c5da;"></div>
<div style="position:absolute;left:2966.5px;top:115.0px;width:2.0px;height:150.0px;background:#b3c5da;"></div>
<div class="t" style="left:199.0px;top:248.9px;font-size:22px;color:#a8a8a8;transform:translateX(-50%);">Definition</div>
<div class="t" style="left:545.0px;top:248.9px;font-size:22px;color:#a8a8a8;transform:translateX(-50%);">Ausführung</div>
<div class="t" style="left:1072.0px;top:248.9px;font-size:22px;color:#a8a8a8;transform:translateX(-50%);">Ergebnis</div>
<div class="t" style="left:1621.5px;top:248.9px;font-size:22px;color:#a8a8a8;transform:translateX(-50%);">Anzeige</div>
<div class="t" style="left:2179.5px;top:248.9px;font-size:22px;color:#a8a8a8;transform:translateX(-50%);">Zugehörigkeit</div>
<div class="t" style="left:2663.0px;top:248.9px;font-size:22px;color:#a8a8a8;transform:translateX(-50%);">Altersschichtung</div>
<div class="t" style="left:2869.0px;top:248.9px;font-size:22px;color:#a8a8a8;transform:translateX(-50%);">Excel-Abfragen</div>
<div style="position:absolute;left:917.0px;top:108.0px;width:153.0px;height:132.0px;border:2px solid #c7a12a;border-radius:6px;background:linear-gradient(#ffdda3 0%,#ffd38b 35%,#ffc560 37%,#ffc663 75%,#ffcf7a 100%);box-shadow:inset 0 0 0 1.5px rgba(255,238,200,.8);"></div>
<div style="position:absolute;left:1069.0px;top:105.0px;width:145.5px;height:137.5px;border:6px solid #f97316;border-radius:5px;background:linear-gradient(#fffaf2 0%,#ffe9cf 20%,#ffdcb4 40%,#ffd37c 41%,#ffd988 70%,#ffe9ac 100%);"></div>
<div class="t" style="left:107.0px;top:188.4px;font-size:22px;color:#a6a6a6;transform:translateX(-50%);">Standardfelder</div>
<div class="t" style="left:287.0px;top:188.4px;font-size:22px;color:#000;transform:translateX(-50%);">Statistik-Modus</div>
<div class="t" style="left:450.7px;top:188.4px;font-size:22px;color:#000;transform:translateX(-50%);">Start</div>
<div class="t" style="left:538.6px;top:188.4px;font-size:22px;color:#a6a6a6;transform:translateX(-50%);">Stop</div>
<div class="t" style="left:633.0px;top:188.4px;font-size:22px;color:#000;transform:translateX(-50%);">Löschen</div>
<div class="t" style="left:755.8px;top:188.4px;font-size:22px;color:#a6a6a6;transform:translateX(-50%);">Anzahl</div>
<div class="t" style="left:858.6px;top:188.4px;font-size:22px;color:#a6a6a6;transform:translateX(-50%);">Nullwerte</div>
<div class="t" style="left:993.7px;top:188.4px;font-size:22px;color:#000;transform:translateX(-50%);">Lookupwerte</div>
<div class="t" style="left:1140.4px;top:188.4px;font-size:22px;color:#000;transform:translateX(-50%);">Exportieren</div>
<div class="t" style="left:1277.5px;top:188.4px;font-size:22px;color:#a6a6a6;transform:translateX(-50%);">Serienbrief</div>
<div class="t" style="left:1386.8px;top:188.4px;font-size:22px;color:#000;transform:translateX(-50%);">Abo</div>
<div class="t" style="left:1503.0px;top:188.4px;font-size:22px;color:#000;transform:translateX(-50%);">Tabelle</div>
<div class="t" style="left:1622.0px;top:188.4px;font-size:22px;color:#a6a6a6;transform:translateX(-50%);">Kreuztabelle</div>
<div class="t" style="left:1740.0px;top:188.4px;font-size:22px;color:#000;transform:translateX(-50%);">SQL</div>
<div class="t" style="left:1869.6px;top:188.4px;font-size:22px;color:#000;transform:translateX(-50%);">Zu</div>
<div class="t" style="left:1869.6px;top:214.4px;font-size:22px;color:#000;transform:translateX(-50%);">Ausbruch</div>
<div class="t" style="left:1993.0px;top:188.4px;font-size:22px;color:#000;transform:translateX(-50%);">Zu neuem</div>
<div class="t" style="left:1993.0px;top:214.4px;font-size:22px;color:#000;transform:translateX(-50%);">Ausbruch</div>
<div class="t" style="left:2180.8px;top:188.4px;font-size:22px;color:#000;transform:translateX(-50%);">Zu</div>
<div class="t" style="left:2180.8px;top:214.4px;font-size:22px;color:#000;transform:translateX(-50%);">Datensatzsammlung</div>
<div class="t" style="left:2423.0px;top:188.4px;font-size:22px;color:#000;transform:translateX(-50%);">Zu neuer</div>
<div class="t" style="left:2423.0px;top:214.4px;font-size:22px;color:#000;transform:translateX(-50%);">Datensatzsammlung</div>
<div class="t" style="left:2640.0px;top:188.4px;font-size:22px;color:#000;transform:translateX(-50%);">Bearbeiten</div>
<div class="t" style="left:2824.7px;top:188.4px;font-size:22px;color:#a6a6a6;transform:translateX(-50%);">OLAP</div>
<div class="t" style="left:2912.8px;top:188.4px;font-size:22px;color:#000;transform:translateX(-50%);">SQL</div>
<svg style="position:absolute;left:0;top:0;" width="3836" height="300" viewBox="0 0 3836 300"><defs>
<linearGradient id="gStart" x1="0" y1="0" x2="0" y2="1"><stop offset="0" stop-color="#93aa90"/><stop offset=".42" stop-color="#55a03a"/><stop offset=".5" stop-color="#3a9a1a"/><stop offset=".75" stop-color="#4fb52c"/><stop offset="1" stop-color="#8df86c"/></linearGradient>
<linearGradient id="gStop" x1="0" y1="0" x2="0" y2="1"><stop offset="0" stop-color="#e2cacb"/><stop offset=".36" stop-color="#d3a3a6"/><stop offset=".38" stop-color="#cf888c"/><stop offset="1" stop-color="#f7b7bb"/></linearGradient>
<linearGradient id="gRedX" x1="0" y1="0" x2="0" y2="1"><stop offset="0" stop-color="#c43a3a"/><stop offset=".5" stop-color="#e82a2a"/><stop offset="1" stop-color="#a80606"/></linearGradient>
<linearGradient id="gBlueL" x1="0" y1="0" x2="1" y2="1"><stop offset="0" stop-color="#b8dcfa"/><stop offset="1" stop-color="#4b9fe6"/></linearGradient>
<linearGradient id="gBlueD" x1="0" y1="0" x2="1" y2="1"><stop offset="0" stop-color="#1e5f9c"/><stop offset="1" stop-color="#3b86c8"/></linearGradient>
<linearGradient id="gBlueR" x1="0" y1="0" x2="0" y2="1"><stop offset="0" stop-color="#1a5690"/><stop offset="1" stop-color="#164a7c"/></linearGradient>
<linearGradient id="gBlueT" x1="0" y1="0" x2="1" y2="0"><stop offset="0" stop-color="#5aaef0"/><stop offset="1" stop-color="#2f80cc"/></linearGradient>
<linearGradient id="gGrayL" x1="0" y1="0" x2="1" y2="1"><stop offset="0" stop-color="#dfe6ec"/><stop offset="1" stop-color="#94a3b0"/></linearGradient>
<linearGradient id="gGrayD" x1="0" y1="0" x2="1" y2="1"><stop offset="0" stop-color="#4e5a64"/><stop offset="1" stop-color="#8996a1"/></linearGradient>
<linearGradient id="gGrayR" x1="0" y1="0" x2="0" y2="1"><stop offset="0" stop-color="#505b65"/><stop offset="1" stop-color="#3b444c"/></linearGradient>
<linearGradient id="gGrayT" x1="0" y1="0" x2="1" y2="0"><stop offset="0" stop-color="#a9b5bf"/><stop offset="1" stop-color="#77848f"/></linearGradient>
<linearGradient id="gGreenA" x1="0" y1="0" x2="0" y2="1"><stop offset="0" stop-color="#2f9412"/><stop offset=".55" stop-color="#45ad22"/><stop offset="1" stop-color="#6fd043"/></linearGradient>
<radialGradient id="gStar"><stop offset="0" stop-color="#fff7d0"/><stop offset=".25" stop-color="#ffb21a"/><stop offset=".6" stop-color="#ffa800" stop-opacity=".85"/><stop offset="1" stop-color="#ffe24a" stop-opacity="0"/></radialGradient>
<linearGradient id="gRedA" x1="0" y1="0" x2="0" y2="1"><stop offset="0" stop-color="#e24a4a"/><stop offset=".5" stop-color="#d01f1f"/><stop offset="1" stop-color="#9a0808"/></linearGradient>
<linearGradient id="gPage" x1="0" y1="0" x2="1" y2="1"><stop offset="0" stop-color="#ffffff"/><stop offset="1" stop-color="#e4ebf5"/></linearGradient>
<radialGradient id="gLens" cx=".4" cy=".35" r=".7"><stop offset="0" stop-color="#ffffff"/><stop offset="1" stop-color="#d5e6f7"/></radialGradient>
<radialGradient id="gLens2" cx=".45" cy=".4" r=".7"><stop offset="0" stop-color="#ffffff"/><stop offset=".6" stop-color="#fdf3dc"/><stop offset="1" stop-color="#e9d3a4"/></radialGradient>
<linearGradient id="gPieB" x1="0" y1="0" x2="1" y2="0"><stop offset="0" stop-color="#3a8bcf"/><stop offset=".5" stop-color="#69aee3"/><stop offset="1" stop-color="#b4dcfa"/></linearGradient>
<linearGradient id="gPieBs" x1="0" y1="0" x2="1" y2="0"><stop offset="0" stop-color="#1b5d9c"/><stop offset=".5" stop-color="#3b8bd0"/><stop offset="1" stop-color="#1b5d9c"/></linearGradient>
<linearGradient id="gPieG" x1="0" y1="0" x2="1" y2="0"><stop offset="0" stop-color="#59c234"/><stop offset=".5" stop-color="#2f8a1a"/><stop offset="1" stop-color="#14540c"/></linearGradient>
<radialGradient id="gSkin" cx=".42" cy=".42" r=".68"><stop offset="0" stop-color="#fff2cc"/><stop offset=".55" stop-color="#f2d08c"/><stop offset="1" stop-color="#b5843a"/></radialGradient>
<linearGradient id="gBodyD" x1="0" y1="0" x2="1" y2="1"><stop offset="0" stop-color="#2a6aa8"/><stop offset="1" stop-color="#113c6c"/></linearGradient>
<linearGradient id="gBodyL" x1="0" y1="0" x2="1" y2="1"><stop offset="0" stop-color="#7db4e6"/><stop offset="1" stop-color="#1f5f9e"/></linearGradient>
<linearGradient id="gCalH" x1="0" y1="0" x2="0" y2="1"><stop offset="0" stop-color="#9aa4ad"/><stop offset=".5" stop-color="#6f7a84"/><stop offset="1" stop-color="#a9b3bb"/></linearGradient>
<linearGradient id="gHandle" x1="0" y1="0" x2="1" y2="1"><stop offset="0" stop-color="#e2b86a"/><stop offset="1" stop-color="#8a5a18"/></linearGradient>
<linearGradient id="gPyr" x1="0" y1="0" x2="1" y2="1"><stop offset="0" stop-color="#69b7f3"/><stop offset=".55" stop-color="#3a8fd6"/><stop offset="1" stop-color="#1b66ac"/></linearGradient><linearGradient id="gSigF" x1="0" y1="0" x2="1" y2="1"><stop offset="0" stop-color="#dfe7ee"/><stop offset=".5" stop-color="#edf0f4"/><stop offset="1" stop-color="#f7f8fa"/></linearGradient><linearGradient id="gSigD" x1="0" y1="0" x2="1" y2="0"><stop offset="0" stop-color="#a4a7ac"/><stop offset="1" stop-color="#c3c6ca"/></linearGradient><linearGradient id="gSigT" x1="0" y1="0" x2="1" y2="0"><stop offset="0" stop-color="#c2c4c7"/><stop offset=".3" stop-color="#eef0f1"/><stop offset=".7" stop-color="#c9cbcd"/><stop offset="1" stop-color="#a9abae"/></linearGradient><linearGradient id="gSigE" x1="0" y1="0" x2="1" y2="1"><stop offset="0" stop-color="#d8dadc"/><stop offset="1" stop-color="#a9acb0"/></linearGradient><linearGradient id="gApp" x1="0" y1="0" x2="0" y2="1"><stop offset="0" stop-color="#86a8e0"/><stop offset=".45" stop-color="#4d78cb"/><stop offset=".5" stop-color="#1b4eb4"/><stop offset="1" stop-color="#3a6cc8"/></linearGradient>
</defs><g transform="translate(3,4.5) scale(1.0)"><polygon points="2.0,21.5 6.2,19.4 14.8,19.4 10.6,21.5" fill="#4a9be0" stroke="#1a5c9c" stroke-width=".6"/><polygon points="10.6,21.5 14.8,19.4 14.8,28.0 10.6,30.1" fill="#134f8c" stroke="#1a5c9c" stroke-width=".6"/><rect x="2.0" y="21.5" width="8.6" height="8.6" fill="url(#gPyr)" stroke="#1a5c9c" stroke-width=".6"/><polygon points="11.2,21.5 15.4,19.4 24.0,19.4 19.8,21.5" fill="#4a9be0" stroke="#1a5c9c" stroke-width=".6"/><polygon points="19.8,21.5 24.0,19.4 24.0,28.0 19.8,30.1" fill="#134f8c" stroke="#1a5c9c" stroke-width=".6"/><rect x="11.2" y="21.5" width="8.6" height="8.6" fill="url(#gPyr)" stroke="#1a5c9c" stroke-width=".6"/><polygon points="20.4,21.5 24.6,19.4 33.2,19.4 29.0,21.5" fill="#4a9be0" stroke="#1a5c9c" stroke-width=".6"/><polygon points="29.0,21.5 33.2,19.4 33.2,28.0 29.0,30.1" fill="#134f8c" stroke="#1a5c9c" stroke-width=".6"/><rect x="20.4" y="21.5" width="8.6" height="8.6" fill="url(#gPyr)" stroke="#1a5c9c" stroke-width=".6"/><polygon points="6.6,12.5 10.8,10.4 19.4,10.4 15.2,12.5" fill="#4a9be0" stroke="#1a5c9c" stroke-width=".6"/><polygon points="15.2,12.5 19.4,10.4 19.4,19.0 15.2,21.1" fill="#134f8c" stroke="#1a5c9c" stroke-width=".6"/><rect x="6.6" y="12.5" width="8.6" height="8.6" fill="url(#gPyr)" stroke="#1a5c9c" stroke-width=".6"/><polygon points="15.8,12.5 20.0,10.4 28.6,10.4 24.4,12.5" fill="#4a9be0" stroke="#1a5c9c" stroke-width=".6"/><polygon points="24.4,12.5 28.6,10.4 28.6,19.0 24.4,21.1" fill="#134f8c" stroke="#1a5c9c" stroke-width=".6"/><rect x="15.8" y="12.5" width="8.6" height="8.6" fill="url(#gPyr)" stroke="#1a5c9c" stroke-width=".6"/><polygon points="11.2,3.5 15.4,1.4 24.0,1.4 19.8,3.5" fill="#4a9be0" stroke="#1a5c9c" stroke-width=".6"/><polygon points="19.8,3.5 24.0,1.4 24.0,10.0 19.8,12.1" fill="#134f8c" stroke="#1a5c9c" stroke-width=".6"/><rect x="11.2" y="3.5" width="8.6" height="8.6" fill="url(#gPyr)" stroke="#1a5c9c" stroke-width=".6"/></g><rect x="51" y="5" width="2" height="22" fill="#a4a4a4"/><rect x="293" y="5" width="2" height="22" fill="#a4a4a4"/><polygon points="79.5,11.5 85.0,8.8 106.5,8.8 101.0,11.5" fill="#b9c8d4" stroke="#6c7f8d" stroke-width=".6"/><polygon points="101.0,11.5 106.5,8.8 106.5,30.8 101.0,33.5" fill="#566d7e" stroke="#6c7f8d" stroke-width=".6"/><rect x="79.5" y="11.5" width="21.5" height="22.0" fill="url(#gGrayL)" stroke="#6c7f8d" stroke-width=".6"/><circle cx="97" cy="13" r="8" fill="url(#gStar)"/><path d="M97 6v14M90 13h14M92.5 8.5l9 9M101.5 8.500l-9 9" stroke="#fff" stroke-width="1.1"/><path d="M127 18h10.500l-5.250 6z" fill="#111"/><polygon points="154.0,12.0 162.0,8.0 181.0,8.0 173.0,12.0" fill="#8fa1ae" stroke="#5f7484" stroke-width=".6"/><polygon points="173.0,12.0 181.0,8.0 181.0,27.0 173.0,31.0" fill="#4e6676" stroke="#5f7484" stroke-width=".6"/><rect x="154.0" y="12.0" width="19.0" height="19.0" fill="url(#gGrayL)" stroke="#5f7484" stroke-width=".6"/><g><rect x="166.500" y="24" width="7" height="10" rx="3" fill="#4a3d30"/><rect x="175.500" y="24" width="7" height="10" rx="3" fill="#4a3d30"/><rect x="171" y="24" width="6" height="5" fill="#3a3028"/><circle cx="170" cy="32.500" r="3.600" fill="#2d6fb5" stroke="#2b2b2b" stroke-width="1.400"/><circle cx="179" cy="32.500" r="3.600" fill="#2d6fb5" stroke="#2b2b2b" stroke-width="1.400"/></g><g opacity=".8"><rect x="197.500" y="8.500" width="25.500" height="26" rx="1.500" fill="#a7aab0" stroke="#8d9096" stroke-width="1"/><rect x="201" y="9.500" width="18.500" height="14" fill="#eaf2fb"/><path d="M201 12.500h18.500M201 15.500h18.500M201 18.500h18.500" stroke="#c3d6ec" stroke-width="1"/><rect x="203.500" y="26" width="13.500" height="8" fill="#d7d9dd"/><rect x="205.500" y="27" width="3.500" height="6" fill="#8d9096"/></g><g opacity=".85"><polygon points="246.0,10.0 252.0,7.0 264.0,7.0 258.0,10.0" fill="#f1f3f5"/><polygon points="258.0,10.0 264.0,7.0 264.0,18.0 258.0,21.0" fill="#b7bcc3"/><rect x="246.0" y="10.0" width="12.0" height="11.0" fill="#e3e6ea"/><polygon points="256.0,21.0 262.0,18.0 272.0,18.0 266.0,21.0" fill="#e8ebee"/><polygon points="266.0,21.0 272.0,18.0 272.0,28.0 266.0,31.0" fill="#a9afb7"/><rect x="256.0" y="21.0" width="10.0" height="10.0" fill="#d5d9de"/><polygon points="243.0,14.0 243.0,14.0 251.0,14.0 251.0,14.0" fill="#fff" stroke="#aeb4bc" stroke-width=".6"/><polygon points="251.0,14.0 251.0,14.0 251.0,22.0 251.0,22.0" fill="#ccc" stroke="#aeb4bc" stroke-width=".6"/><rect x="243.0" y="14.0" width="8.0" height="8.0" fill="#f7f8fa" stroke="#aeb4bc" stroke-width=".6"/><path d="M239.500 27c0-3 3-5.500 8-5.500 4 0 7 1.500 8.500 4.500-2-.8-4.500-1-6.500-.5l2.500 5-8 5.500-4.500-0.500z" fill="#f0a0a0" stroke="#e88" stroke-width=".6"/></g><g transform="translate(37,57) scale(0.92)"><polygon points="2.0,21.5 6.2,19.4 14.8,19.4 10.6,21.5" fill="#4a9be0" stroke="#1a5c9c" stroke-width=".6"/><polygon points="10.6,21.5 14.8,19.4 14.8,28.0 10.6,30.1" fill="#134f8c" stroke="#1a5c9c" stroke-width=".6"/><rect x="2.0" y="21.5" width="8.6" height="8.6" fill="url(#gPyr)" stroke="#1a5c9c" stroke-width=".6"/><polygon points="11.2,21.5 15.4,19.4 24.0,19.4 19.8,21.5" fill="#4a9be0" stroke="#1a5c9c" stroke-width=".6"/><polygon points="19.8,21.5 24.0,19.4 24.0,28.0 19.8,30.1" fill="#134f8c" stroke="#1a5c9c" stroke-width=".6"/><rect x="11.2" y="21.5" width="8.6" height="8.6" fill="url(#gPyr)" stroke="#1a5c9c" stroke-width=".6"/><polygon points="20.4,21.5 24.6,19.4 33.2,19.4 29.0,21.5" fill="#4a9be0" stroke="#1a5c9c" stroke-width=".6"/><polygon points="29.0,21.5 33.2,19.4 33.2,28.0 29.0,30.1" fill="#134f8c" stroke="#1a5c9c" stroke-width=".6"/><rect x="20.4" y="21.5" width="8.6" height="8.6" fill="url(#gPyr)" stroke="#1a5c9c" stroke-width=".6"/><polygon points="6.6,12.5 10.8,10.4 19.4,10.4 15.2,12.5" fill="#4a9be0" stroke="#1a5c9c" stroke-width=".6"/><polygon points="15.2,12.5 19.4,10.4 19.4,19.0 15.2,21.1" fill="#134f8c" stroke="#1a5c9c" stroke-width=".6"/><rect x="6.6" y="12.5" width="8.6" height="8.6" fill="url(#gPyr)" stroke="#1a5c9c" stroke-width=".6"/><polygon points="15.8,12.5 20.0,10.4 28.6,10.4 24.4,12.5" fill="#4a9be0" stroke="#1a5c9c" stroke-width=".6"/><polygon points="24.4,12.5 28.6,10.4 28.6,19.0 24.4,21.1" fill="#134f8c" stroke="#1a5c9c" stroke-width=".6"/><rect x="15.8" y="12.5" width="8.6" height="8.6" fill="url(#gPyr)" stroke="#1a5c9c" stroke-width=".6"/><polygon points="11.2,3.5 15.4,1.4 24.0,1.4 19.8,3.5" fill="#4a9be0" stroke="#1a5c9c" stroke-width=".6"/><polygon points="19.8,3.5 24.0,1.4 24.0,10.0 19.8,12.1" fill="#134f8c" stroke="#1a5c9c" stroke-width=".6"/><rect x="11.2" y="3.5" width="8.6" height="8.6" fill="url(#gPyr)" stroke="#1a5c9c" stroke-width=".6"/></g><path d="M75 69.500h16l-8 10.500z" fill="#fff"/><path d="M80.500 72.500h5l-2.500 3.200z" fill="#c8cede"/><circle cx="3779.500" cy="71.800" r="13.200" fill="#3b86c9" stroke="#aab4be" stroke-width="1.600"/><circle cx="3779.500" cy="71.500" r="11.500" fill="none" stroke="#1c4f96" stroke-width="1"/><path d="M3770 66a10 8 0 0 1 19 0a16 9 0 0 0-19 0z" fill="#9cc4f0" opacity=".7"/><text x="3779.500" y="80" text-anchor="middle" font-family="DejaVu Sans,Liberation Sans,sans-serif" font-weight="bold" font-size="21" fill="#f4f8fc">?</text><path d="M3812.500 68.500h12l-6 6.500z" fill="#111"/><g opacity="0.95"><rect x="81" y="120" width="52" height="52" fill="#fff"/><rect x="84.0" y="123.0" width="11.3" height="11.3" fill="#eef3fb"/><rect x="101.3" y="123.0" width="11.3" height="11.3" fill="#eef3fb"/><rect x="118.7" y="123.0" width="11.3" height="11.3" fill="#eef3fb"/><rect x="84.0" y="140.3" width="11.3" height="11.3" fill="#eef3fb"/><rect x="101.3" y="140.3" width="11.3" height="11.3" fill="#eef3fb"/><rect x="118.7" y="140.3" width="11.3" height="11.3" fill="#eef3fb"/><rect x="84.0" y="157.7" width="11.3" height="11.3" fill="#eef3fb"/><rect x="101.3" y="157.7" width="11.3" height="11.3" fill="#eef3fb"/><rect x="118.7" y="157.7" width="11.3" height="11.3" fill="#eef3fb"/><path d="M81 120h52v52h-52z M98.3 120v52 M115.7 120v52 M81 137.3h52 M81 154.7h52" fill="none" stroke="#a9afb7" stroke-width="1.2"/></g><polygon points="95.2,141.500 99.300,137 106.500,145.500 121.500,126 126,129.500 107,154.500" fill="#a9d79c" stroke="#86bd78" stroke-width="1.200" opacity=".95"/><g opacity="0.9"><polygon points="107.2,177.0 117.8,173.6 111.6,166.8" fill="#e9cf9a" stroke="#a58a55" stroke-width=".8"/><polygon points="107.2,177.0 110.9,175.8 108.7,173.4" fill="#555"/><polygon points="117.8,173.6 134.8,158.0 128.6,151.2 111.6,166.8" fill="#efe2a2" stroke="#9c8420" stroke-width=".8"/><polygon points="115.6,171.2 132.6,155.6 130.4,153.2 113.4,168.8" fill="#fff" opacity=".35"/><polygon points="134.8,158.0 138.5,154.6 132.2,147.8 128.6,151.2" fill="#e8e8ea" stroke="#999" stroke-width=".8"/><path d="M138.5 154.6 A4.6 4.6 0 0 0 132.2 147.8z" fill="#f6c3bd" stroke="#e99a92" stroke-width=".8"/></g><path d="M255.0 137.5 v15 A30.5 16.5 0 0 0 316.0 152.5 v-15z" fill="url(#gPieBs)"/><ellipse cx="285.5" cy="137.5" rx="30.5" ry="16.5" fill="url(#gPieB)" stroke="#2f7dc0" stroke-width="1"/><ellipse cx="281.5" cy="135.5" rx="21.3" ry="9.9" fill="#fff" opacity=".14"/><path d="M285.5 137.5 L313.8 131.3 A30.5 16.5 0 0 1 315.1 141.5z" fill="#ffd21f" stroke="#e0a800" stroke-width=".8"/><path d="M285.5 137.5 L315.1 141.5 v5 L285.5 141.5z" fill="#f0a800"/><path d="M316.8 144.7 A30.5 16.5 0 0 1 267.7 156.0 v15 A30.5 16.5 0 0 0 316.8 159.7z" fill="url(#gPieG)"/><path d="M286.5 143.0 L267.7 156.0 v15 L286.5 158.0z" fill="#2f8f1c"/><path d="M286.5 143.0 L316.8 144.7 A30.5 16.5 0 0 1 267.7 156.0z" fill="#55a83e" stroke="#d9f2cf" stroke-width="1"/><path d="M430.700 120.800L471.100 145.500L430.700 170.300z" fill="#2d8c10" stroke="#2d8c10" stroke-width="13" stroke-linejoin="round"/><path d="M430.700 120.800L471.100 145.500L430.700 170.300z" fill="url(#gStart)" stroke="url(#gStart)" stroke-width="4.500" stroke-linejoin="round"/><path d="M429 119.500L470 145.500C455 140.500 440 141 429 146z" fill="#fff" opacity=".16"/><rect x="511.800" y="118.500" width="54.700" height="54.600" rx="7" fill="url(#gStop)" stroke="#e9a3a8" stroke-width="3.200"/><g opacity="1"><rect x="607" y="121" width="52" height="52" fill="#fff"/><rect x="610.0" y="124.0" width="11.3" height="11.3" fill="#e6eef8"/><rect x="627.3" y="124.0" width="11.3" height="11.3" fill="#e6eef8"/><rect x="644.7" y="124.0" width="11.3" height="11.3" fill="#e6eef8"/><rect x="610.0" y="141.3" width="11.3" height="11.3" fill="#e6eef8"/><rect x="627.3" y="141.3" width="11.3" height="11.3" fill="#e6eef8"/><rect x="644.7" y="141.3" width="11.3" height="11.3" fill="#e6eef8"/><rect x="610.0" y="158.7" width="11.3" height="11.3" fill="#e6eef8"/><rect x="627.3" y="158.7" width="11.3" height="11.3" fill="#e6eef8"/><rect x="644.7" y="158.7" width="11.3" height="11.3" fill="#e6eef8"/><path d="M607 121h52v52h-52z M624.3 121v52 M641.7 121v52 M607 138.3h52 M607 155.7h52" fill="none" stroke="#3f5163" stroke-width="1.3"/></g><g transform="translate(651,165) rotate(45)"><path d="M-16 -4.0H-4.0V-16H4.0V-4.0H16V4.0H4.0V16H-4.0V4.0H-16z" fill="url(#gRedX)" stroke="#8e0a0a" stroke-width="1.200" stroke-linejoin="round"/></g><g><polygon points="756.4,147.5 766.5,143.4 753.1,156.2 777.7,161.1 769.5,165.8 743.9,160.6" fill="url(#gSigD)"/><polygon points="745.2,132.8 760.5,134.5 766.5,143.4 756.4,147.5" fill="url(#gSigD)"/><polygon points="728.4,118.9 736.3,115.1 777.7,119.7 769.5,123.8" fill="url(#gSigT)" stroke="#c2c5c9" stroke-width=".7"/><polygon points="769.5,123.8 777.7,119.7 777.7,131.4 769.5,135.5" fill="url(#gSigE)" stroke="#c2c5c9" stroke-width=".7"/><polygon points="769.5,165.8 777.7,161.1 777.7,172.0 769.5,177.5" fill="url(#gSigE)" stroke="#c2c5c9" stroke-width=".7"/><polygon points="728.4,118.9 769.5,123.8 769.5,135.5 745.2,132.8 756.4,147.5 743.9,160.6 769.5,165.8 769.5,177.5 730.8,168.2 730.8,157.0 743.1,145.6 728.4,129.5" fill="url(#gSigF)" stroke="#bfc3c8" stroke-width="1.100" stroke-linejoin="round"/></g><path d="M858.500 147.500L832 173" stroke="#d9c8ab" stroke-width="8.500" stroke-linecap="round"/><path d="M857 146L833.500 168.500" stroke="#efe4cf" stroke-width="2.500" stroke-linecap="round"/><path d="M860.500 145.500l-4 4" stroke="#b9c0c8" stroke-width="9"/><circle cx="871.400" cy="133.600" r="17" fill="url(#gLens)" stroke="#b4bcc6" stroke-width="3.400"/><circle cx="871.400" cy="133.600" r="14.500" fill="none" stroke="#fff" stroke-width="1.500" opacity=".8"/><path d="M990.500 151L968.500 172.500" stroke="#7c5418" stroke-width="9.500" stroke-linecap="round"/><path d="M990.500 151L968.500 172.500" stroke="#c9953f" stroke-width="6.500" stroke-linecap="round"/><path d="M989 150L969 169.500" stroke="#f0d090" stroke-width="2" stroke-linecap="round"/><path d="M993 148.500l-4.500 4.500" stroke="#8e9aa6" stroke-width="10"/><circle cx="1005" cy="136" r="18.200" fill="url(#gLens2)" stroke="#34455a" stroke-width="4.800"/><circle cx="1005" cy="136" r="20.800" fill="none" stroke="#c3cfdc" stroke-width="1.400"/><circle cx="1005" cy="136" r="18.400" fill="none" stroke="#8ea3ba" stroke-width="1.200" opacity=".8"/><circle cx="1005" cy="136" r="15.200" fill="none" stroke="#fff" stroke-width="1.600" opacity=".95"/><text x="1005.500" y="144" text-anchor="middle" font-family="DejaVu Sans,Liberation Sans,sans-serif" font-weight="bold" font-size="22" fill="#111" textLength="25" lengthAdjust="spacingAndGlyphs">1:1</text><path d="M1117.500 115.500H1147.500L1165 133V176.500H1117.500z" fill="url(#gPage)" stroke="#c2cad6" stroke-width="1.200"/><path d="M1147.500 115.500V133H1165z" fill="#e3e9f2" stroke="#c2cad6" stroke-width="1"/><rect x="1125" y="138" width="32" height="32" rx="3.500" fill="#1f7244"/><text x="1142.500" y="163.500" text-anchor="middle" font-family="DejaVu Sans,Liberation Sans,sans-serif" font-weight="bold" font-size="27" fill="#fff" textLength="16" lengthAdjust="spacingAndGlyphs">X</text><path d="M1109.500 161L1126 146.500V154.500C1133 154 1138 151 1141 147C1141.500 160 1136 169 1126 169.500V177.500z" fill="url(#gRedA)" stroke="#8f0c0c" stroke-width="1.200" stroke-linejoin="round"/><path d="M1112.500 160.500L1124.500 150V156C1131 156 1136 154 1139.500 151C1137 156 1131 159 1124 159z" fill="#fff" opacity=".22"/><g opacity=".9"><polygon points="1250.500,139 1274.500,114 1298.500,136 1298.500,177 1252,167" fill="#d9dde1" stroke="#c3c8ce" stroke-width="1"/><polygon points="1255.500,128.500 1291.500,131.500 1291.500,141 1272,152 1256.500,143" fill="#f3ecb2" stroke="#e3da96" stroke-width=".8"/><path d="M1259 134l14 1M1260 138l18 1.500M1262 142l14 1.500M1278 136l9 1" stroke="#cfc58a" stroke-width="1"/><polygon points="1250.500,139 1271.500,150 1252,167" fill="#e9ecef" stroke="#cdd2d8" stroke-width=".8"/><polygon points="1298.500,136 1271.500,150 1298.500,177" fill="#dfe3e7" stroke="#cdd2d8" stroke-width=".8"/><polygon points="1252,167 1271.500,149 1298.500,177" fill="#f2f4f6" stroke="#cdd2d8" stroke-width=".8"/><path d="M1253 117.500L1276 142" stroke="#a9aeb5" stroke-width="6" stroke-linecap="round"/><path d="M1253 117.500L1266 131.500" stroke="#d5d8dc" stroke-width="6.500" stroke-linecap="round"/><path d="M1252 116.500L1264 129.500" stroke="#f3f4f6" stroke-width="2" stroke-linecap="round"/><circle cx="1253" cy="117.500" r="2.800" fill="none" stroke="#b9bec5" stroke-width="1"/></g><polygon points="1403,120 1407.600,122 1407.600,177.500 1403,176" fill="#7b8794"/><polygon points="1361.500,119 1405,121.500 1405,177 1361,165.500" fill="#fbfcfe" stroke="#9aa4af" stroke-width="1"/><path d="M1364 127.0L1402 130.2" stroke="#8d9fd6" stroke-width=".9"/><path d="M1364 131.0L1402 135.0" stroke="#8d9fd6" stroke-width=".9"/><path d="M1364 135.0L1402 139.8" stroke="#8d9fd6" stroke-width=".9"/><path d="M1364 139.0L1402 144.6" stroke="#8d9fd6" stroke-width=".9"/><path d="M1364 143.0L1402 149.4" stroke="#8d9fd6" stroke-width=".9"/><path d="M1364 147.0L1402 154.2" stroke="#8d9fd6" stroke-width=".9"/><path d="M1364 151.0L1402 159.0" stroke="#8d9fd6" stroke-width=".9"/><path d="M1364 155.0L1402 163.8" stroke="#8d9fd6" stroke-width=".9"/><path d="M1364 159.0L1402 168.6" stroke="#8d9fd6" stroke-width=".9"/><path d="M1364 163.0L1402 173.4" stroke="#8d9fd6" stroke-width=".9"/><path d="M1371.500 125V163" stroke="#e23b3b" stroke-width="1.300"/><circle cx="1365.0" cy="121.8" r="1" fill="#555"/><path d="M1365.0 121.5v-5.500" stroke="#6a6a6a" stroke-width="1.300"/><circle cx="1368.7" cy="122.0" r="1" fill="#555"/><path d="M1368.7 121.7v-5.500" stroke="#6a6a6a" stroke-width="1.300"/><circle cx="1372.4" cy="122.2" r="1" fill="#555"/><path d="M1372.4 121.9v-5.500" stroke="#6a6a6a" stroke-width="1.300"/><circle cx="1376.1" cy="122.5" r="1" fill="#555"/><path d="M1376.1 122.2v-5.500" stroke="#6a6a6a" stroke-width="1.300"/><circle cx="1379.8" cy="122.7" r="1" fill="#555"/><path d="M1379.8 122.4v-5.500" stroke="#6a6a6a" stroke-width="1.300"/><circle cx="1383.5" cy="122.9" r="1" fill="#555"/><path d="M1383.5 122.6v-5.500" stroke="#6a6a6a" stroke-width="1.300"/><circle cx="1387.2" cy="123.1" r="1" fill="#555"/><path d="M1387.2 122.8v-5.500" stroke="#6a6a6a" stroke-width="1.300"/><circle cx="1390.9" cy="123.3" r="1" fill="#555"/><path d="M1390.9 123.0v-5.500" stroke="#6a6a6a" stroke-width="1.300"/><circle cx="1394.6" cy="123.6" r="1" fill="#555"/><path d="M1394.6 123.3v-5.500" stroke="#6a6a6a" stroke-width="1.300"/><circle cx="1398.3" cy="123.8" r="1" fill="#555"/><path d="M1398.3 123.5v-5.500" stroke="#6a6a6a" stroke-width="1.300"/><circle cx="1402.0" cy="124.0" r="1" fill="#555"/><path d="M1402.0 123.7v-5.500" stroke="#6a6a6a" stroke-width="1.300"/><path d="M1364 116.500L1404 118.500" stroke="#8a8a8a" stroke-width="2.500"/><g opacity="1"><polygon points="1387.0,178.0 1398.9,173.9 1391.7,166.4" fill="#e9cf9a" stroke="#a58a55" stroke-width=".8"/><polygon points="1387.0,178.0 1391.2,176.6 1388.7,173.9" fill="#555"/><polygon points="1398.9,173.9 1415.8,157.9 1408.7,150.3 1391.7,166.4" fill="#e9c31e" stroke="#9c8420" stroke-width=".8"/><polygon points="1396.4,171.3 1413.3,155.2 1410.8,152.6 1393.9,168.6" fill="#fff" opacity=".35"/><polygon points="1415.8,157.9 1419.5,154.4 1412.3,146.9 1408.7,150.3" fill="#e8e8ea" stroke="#999" stroke-width=".8"/><path d="M1419.5 154.4 A5.2 5.2 0 0 0 1412.3 146.9z" fill="#e0463c" stroke="#a8281f" stroke-width=".8"/></g><g opacity="1"><rect x="1477" y="120" width="52" height="52" fill="#fff"/><rect x="1480.0" y="123.0" width="11.3" height="11.3" fill="#e4edf8"/><rect x="1497.3" y="123.0" width="11.3" height="11.3" fill="#e4edf8"/><rect x="1514.7" y="123.0" width="11.3" height="11.3" fill="#e4edf8"/><rect x="1480.0" y="140.3" width="11.3" height="11.3" fill="#e4edf8"/><rect x="1497.3" y="140.3" width="11.3" height="11.3" fill="#e4edf8"/><rect x="1514.7" y="140.3" width="11.3" height="11.3" fill="#e4edf8"/><rect x="1480.0" y="157.7" width="11.3" height="11.3" fill="#e4edf8"/><rect x="1497.3" y="157.7" width="11.3" height="11.3" fill="#e4edf8"/><rect x="1514.7" y="157.7" width="11.3" height="11.3" fill="#e4edf8"/><path d="M1477 120h52v52h-52z M1494.3 120v52 M1511.7 120v52 M1477 137.3h52 M1477 154.7h52" fill="none" stroke="#36475a" stroke-width="1.4"/></g><g opacity="1"><rect x="1596" y="120" width="52" height="52" fill="#fff"/><rect x="1599.0" y="123.0" width="11.3" height="11.3" fill="#f1f5fb"/><rect x="1616.3" y="123.0" width="11.3" height="11.3" fill="#aad3f7"/><rect x="1633.7" y="123.0" width="11.3" height="11.3" fill="#aad3f7"/><rect x="1599.0" y="140.3" width="11.3" height="11.3" fill="#aad3f7"/><rect x="1616.3" y="140.3" width="11.3" height="11.3" fill="#f1f5fb"/><rect x="1633.7" y="140.3" width="11.3" height="11.3" fill="#f1f5fb"/><rect x="1599.0" y="157.7" width="11.3" height="11.3" fill="#aad3f7"/><rect x="1616.3" y="157.7" width="11.3" height="11.3" fill="#f1f5fb"/><rect x="1633.7" y="157.7" width="11.3" height="11.3" fill="#f1f5fb"/><path d="M1596 120h52v52h-52z M1613.3 120v52 M1630.7 120v52 M1596 137.3h52 M1596 154.7h52" fill="none" stroke="#9aa3ad" stroke-width="1.6"/></g><path d="M1613.300 120h34.700v17.300h-34.700zM1596 137.300h17.300v34.700h-17.300zM1630.700 120v17.300M1596 154.700h17.300" fill="none" stroke="#7fb0e0" stroke-width="1.600"/><rect x="1713.500" y="117.500" width="53.500" height="57" fill="url(#gPage)" stroke="#8d97a3" stroke-width="1.400"/><rect x="1717" y="120.5" width="22.5" height="3.300" fill="#2a2a2e"/><rect x="1742" y="120.5" width="11.0" height="3.300" fill="#2a2a2e"/><rect x="1724" y="126.4" width="9.7" height="3.300" fill="#2a2a2e"/><rect x="1732" y="132.3" width="18.0" height="3.300" fill="#2a2a2e"/><rect x="1752.3" y="132.3" width="8.7" height="3.300" fill="#2a2a2e"/><rect x="1724" y="138.3" width="9.7" height="3.300" fill="#2a2a2e"/><rect x="1732" y="144" width="9.4" height="3.300" fill="#2a2a2e"/><rect x="1739.5" y="150.3" width="23.0" height="3.300" fill="#2a2a2e"/><rect x="1732" y="156" width="7.0" height="3.300" fill="#2a2a2e"/><rect x="1724" y="162" width="9.7" height="3.300" fill="#2a2a2e"/><rect x="1717" y="168.4" width="9.0" height="3.300" fill="#2a2a2e"/><path d="M1758 164L1769 175" stroke="#7a5216" stroke-width="6" stroke-linecap="round"/><path d="M1758 164L1769 175" stroke="#cf9a3c" stroke-width="3.600" stroke-linecap="round"/><circle cx="1750.700" cy="156.600" r="10" fill="#e9f1fa" fill-opacity=".9" stroke="#5a5f66" stroke-width="2.400"/><circle cx="1750.700" cy="156.600" r="8" fill="none" stroke="#fff" stroke-width="1" opacity=".9"/><g transform="translate(0,0)"><polygon points="1841.700,144.500 1854,141 1900.700,144.100 1890.800,150.300 1868.400,147.500" fill="url(#gBlueT)"/><polygon points="1841.700,144.500 1868.400,147.900 1868.400,170.800 1842.400,168.400" fill="url(#gBlueL)"/><polygon points="1868.400,147.200 1890.800,150.300 1890.800,174.600 1868.400,170.800" fill="url(#gBlueD)"/><polygon points="1877,158 1890.800,152 1890.800,172" fill="#fff" opacity=".13"/><polygon points="1890.800,150.300 1900.700,144.100 1900.700,167.100 1890.800,174.600" fill="url(#gBlueR)"/><polygon points="1853.500,120.900 1866,117 1887.700,119.700 1875.300,123.600" fill="url(#gBlueT)"/><polygon points="1853.500,120.900 1875.300,123.600 1875.300,148.500 1854.200,144.800" fill="url(#gBlueL)"/><polygon points="1875.300,123.600 1887.700,119.700 1887.700,142.300 1875.300,148.500" fill="url(#gBlueR)"/><path d="M1840.500 146C1840.500 163.400 1847.300 169.600 1857.300 169.600V177.700L1872.200 161.500L1857.300 145.400V152.800C1851 152.800 1846.100 149.700 1843 144.100C1841.500 144 1840.500 145 1840.500 146z" fill="url(#gGreenA)" stroke="#7edc4e" stroke-width="1.400" stroke-linejoin="round"/><path d="M1842 147C1844 155 1850 157.500 1858.500 157.500V149L1869.500 161C1860 160 1846 162 1842 147z" fill="#fff" opacity=".16"/></g><g transform="translate(124.8,0)"><polygon points="1841.700,144.500 1854,141 1900.700,144.100 1890.800,150.300 1868.400,147.500" fill="url(#gBlueT)"/><polygon points="1841.700,144.500 1868.400,147.900 1868.400,170.800 1842.400,168.400" fill="url(#gBlueL)"/><polygon points="1868.400,147.200 1890.800,150.300 1890.800,174.600 1868.400,170.800" fill="url(#gBlueD)"/><polygon points="1877,158 1890.800,152 1890.800,172" fill="#fff" opacity=".13"/><polygon points="1890.800,150.300 1900.700,144.100 1900.700,167.100 1890.800,174.600" fill="url(#gBlueR)"/><polygon points="1853.500,120.900 1866,117 1887.700,119.700 1875.300,123.600" fill="url(#gBlueT)"/><polygon points="1853.500,120.900 1875.300,123.600 1875.300,148.500 1854.200,144.800" fill="url(#gBlueL)"/><polygon points="1875.300,123.600 1887.700,119.700 1887.700,142.300 1875.300,148.500" fill="url(#gBlueR)"/><path d="M1840.500 146C1840.500 163.400 1847.300 169.600 1857.300 169.600V177.700L1872.200 161.500L1857.300 145.400V152.800C1851 152.800 1846.100 149.700 1843 144.100C1841.500 144 1840.500 145 1840.500 146z" fill="url(#gGreenA)" stroke="#7edc4e" stroke-width="1.400" stroke-linejoin="round"/><path d="M1842 147C1844 155 1850 157.500 1858.500 157.500V149L1869.500 161C1860 160 1846 162 1842 147z" fill="#fff" opacity=".16"/><circle cx="1876.600" cy="129.800" r="17" fill="url(#gStar)"/><path d="M1876.600 118.500v22.600M1865.300 129.800h22.600M1868.600 121.800l16 16M1884.600 121.800l-16 16" stroke="#fff" stroke-width="1.100" stroke-linecap="round" opacity=".9"/><circle cx="1876.600" cy="129.800" r="3.200" fill="#fff"/></g><g transform="translate(311.8,0)"><polygon points="1841.700,144.500 1854,141 1900.700,144.100 1890.800,150.300 1868.400,147.500" fill="url(#gGrayT)"/><polygon points="1841.700,144.500 1868.400,147.900 1868.400,170.800 1842.400,168.400" fill="url(#gGrayL)"/><polygon points="1868.400,147.200 1890.800,150.300 1890.800,174.600 1868.400,170.800" fill="url(#gGrayD)"/><polygon points="1877,158 1890.800,152 1890.800,172" fill="#fff" opacity=".13"/><polygon points="1890.800,150.300 1900.700,144.100 1900.700,167.100 1890.800,174.600" fill="url(#gGrayR)"/><polygon points="1853.500,120.900 1866,117 1887.700,119.700 1875.300,123.600" fill="url(#gGrayT)"/><polygon points="1853.500,120.900 1875.300,123.600 1875.300,148.500 1854.200,144.800" fill="url(#gGrayL)"/><polygon points="1875.300,123.600 1887.700,119.700 1887.700,142.300 1875.300,148.500" fill="url(#gGrayR)"/><path d="M1840.500 146C1840.500 163.400 1847.300 169.600 1857.300 169.600V177.700L1872.200 161.500L1857.300 145.400V152.800C1851 152.800 1846.100 149.700 1843 144.100C1841.500 144 1840.500 145 1840.500 146z" fill="url(#gGreenA)" stroke="#7edc4e" stroke-width="1.400" stroke-linejoin="round"/><path d="M1842 147C1844 155 1850 157.500 1858.500 157.500V149L1869.500 161C1860 160 1846 162 1842 147z" fill="#fff" opacity=".16"/></g><g transform="translate(554,0)"><polygon points="1841.700,144.500 1854,141 1900.700,144.100 1890.800,150.300 1868.400,147.500" fill="url(#gGrayT)"/><polygon points="1841.700,144.500 1868.400,147.900 1868.400,170.800 1842.400,168.400" fill="url(#gGrayL)"/><polygon points="1868.400,147.200 1890.800,150.300 1890.800,174.600 1868.400,170.800" fill="url(#gGrayD)"/><polygon points="1877,158 1890.800,152 1890.800,172" fill="#fff" opacity=".13"/><polygon points="1890.800,150.300 1900.700,144.100 1900.700,167.100 1890.800,174.600" fill="url(#gGrayR)"/><polygon points="1853.500,120.900 1866,117 1887.700,119.700 1875.300,123.600" fill="url(#gGrayT)"/><polygon points="1853.500,120.900 1875.300,123.600 1875.300,148.500 1854.200,144.800" fill="url(#gGrayL)"/><polygon points="1875.300,123.600 1887.700,119.700 1887.700,142.300 1875.300,148.500" fill="url(#gGrayR)"/><path d="M1840.500 146C1840.500 163.400 1847.300 169.600 1857.300 169.600V177.700L1872.200 161.500L1857.300 145.400V152.800C1851 152.800 1846.100 149.700 1843 144.100C1841.500 144 1840.500 145 1840.500 146z" fill="url(#gGreenA)" stroke="#7edc4e" stroke-width="1.400" stroke-linejoin="round"/><path d="M1842 147C1844 155 1850 157.500 1858.500 157.500V149L1869.500 161C1860 160 1846 162 1842 147z" fill="#fff" opacity=".16"/><circle cx="1876.600" cy="129.800" r="17" fill="url(#gStar)"/><path d="M1876.600 118.500v22.600M1865.300 129.800h22.600M1868.600 121.800l16 16M1884.600 121.800l-16 16" stroke="#fff" stroke-width="1.100" stroke-linecap="round" opacity=".9"/><circle cx="1876.600" cy="129.800" r="3.200" fill="#fff"/></g><path d="M2609 172C2609 150 2616 143 2630 141C2646 143 2652 152 2652 172C2640 176 2620 176 2609 172z" fill="url(#gBodyD)"/><ellipse cx="2630.500" cy="131.500" rx="11.500" ry="14.500" fill="url(#gSkin)"/><path d="M2618.500 130C2616 118 2624 115 2632 115.500C2640 116 2644 120 2642.500 125C2638 122 2630 122 2624 124C2622 126 2621 130 2620.500 134z" fill="#7a5a2c"/><path d="M2638 176C2638 162 2643 157 2653 156C2664 157 2669 164 2669.500 174C2660 178.500 2646 178.500 2638 176z" fill="url(#gBodyL)"/><ellipse cx="2652.500" cy="147" rx="9.500" ry="12" fill="url(#gSkin)"/><path d="M2642.500 143C2642 134 2649 131.500 2655 132.500C2662 133.500 2664.500 140 2662 149C2660.500 145 2658 141 2654 140.500C2650 140 2645 141 2642.500 143z" fill="#2d3640"/><path d="M2615 175C2615 168 2620 165 2627 165C2634 165 2638 168 2638 175C2631 178 2621 178 2615 175z" fill="#e8c526"/><path d="M2621.500 166.500C2623 172 2631 172 2632.500 166.500z" fill="#8ec0ee"/><ellipse cx="2626.600" cy="157" rx="9" ry="9.500" fill="url(#gSkin)"/><g opacity=".95"><polygon points="2797.500,128.500 2820,123 2848,131 2848,160 2830,173 2799,166" fill="#b9e6b0" stroke="#a4d69a" stroke-width="1"/><polygon points="2797.500,128.500 2814,133 2814.500,170 2799,166" fill="#c9eec2"/><polygon points="2814,133 2848,131 2848,160 2830,173 2814.500,170" fill="#b2e0a8"/><path d="M2798 147.500L2814.500 151.500L2846 147M2814 133V170" stroke="#dff5da" stroke-width="1.400" fill="none"/><polygon points="2823,118 2840,116.500 2852.500,126 2846.500,143.500 2829,148 2818,138.500" fill="#b5e3ab" stroke="#a4d69a" stroke-width="1"/><polygon points="2823,118 2840,116.500 2852.500,126 2835,128.500" fill="#d3f1cc"/><polygon points="2823,118 2835,128.500 2829,148 2818,138.500" fill="#c6ecbe"/></g><rect x="2882.500" y="120.500" width="60" height="51" rx="1.500" fill="#fff" stroke="#6f7a84" stroke-width="1.600"/><rect x="2883.300" y="121.300" width="58.400" height="6.200" fill="url(#gCalH)"/><rect x="2885.3" y="129.0" width="6.5" height="4.5" fill="#fff" stroke="#b8c0c6" stroke-width=".7"/><rect x="2893.4" y="129.0" width="6.5" height="4.5" fill="#fff" stroke="#b8c0c6" stroke-width=".7"/><rect x="2901.4" y="129.0" width="6.5" height="4.5" fill="#fff" stroke="#b8c0c6" stroke-width=".7"/><rect x="2909.5" y="129.0" width="6.5" height="4.5" fill="#fff" stroke="#b8c0c6" stroke-width=".7"/><rect x="2917.5" y="129.0" width="6.5" height="4.5" fill="#e6ebe9" stroke="#b8c0c6" stroke-width=".7"/><rect x="2925.6" y="129.0" width="6.5" height="4.5" fill="#e6ebe9" stroke="#b8c0c6" stroke-width=".7"/><rect x="2933.6" y="129.0" width="6.5" height="4.5" fill="#e6ebe9" stroke="#b8c0c6" stroke-width=".7"/><rect x="2885.3" y="134.9" width="6.5" height="4.5" fill="#fff" stroke="#b8c0c6" stroke-width=".7"/><rect x="2893.4" y="134.9" width="6.5" height="4.5" fill="#3f8fdc" stroke="#2f7cc8" stroke-width=".7"/><rect x="2901.4" y="134.9" width="6.5" height="4.5" fill="#3f8fdc" stroke="#2f7cc8" stroke-width=".7"/><rect x="2909.5" y="134.9" width="6.5" height="4.5" fill="#3f8fdc" stroke="#2f7cc8" stroke-width=".7"/><rect x="2917.5" y="134.9" width="6.5" height="4.5" fill="#e6ebe9" stroke="#b8c0c6" stroke-width=".7"/><rect x="2925.6" y="134.9" width="6.5" height="4.5" fill="#e6ebe9" stroke="#b8c0c6" stroke-width=".7"/><rect x="2933.6" y="134.9" width="6.5" height="4.5" fill="#e6ebe9" stroke="#b8c0c6" stroke-width=".7"/><rect x="2885.3" y="140.9" width="6.5" height="4.5" fill="#fff" stroke="#b8c0c6" stroke-width=".7"/><rect x="2893.4" y="140.9" width="6.5" height="4.5" fill="#3f8fdc" stroke="#2f7cc8" stroke-width=".7"/><rect x="2901.4" y="140.9" width="6.5" height="4.5" fill="#3f8fdc" stroke="#2f7cc8" stroke-width=".7"/><rect x="2909.5" y="140.9" width="6.5" height="4.5" fill="#3f8fdc" stroke="#2f7cc8" stroke-width=".7"/><rect x="2917.5" y="140.9" width="6.5" height="4.5" fill="#e6ebe9" stroke="#b8c0c6" stroke-width=".7"/><rect x="2925.6" y="140.9" width="6.5" height="4.5" fill="#e6ebe9" stroke="#b8c0c6" stroke-width=".7"/><rect x="2933.6" y="140.9" width="6.5" height="4.5" fill="#e6ebe9" stroke="#b8c0c6" stroke-width=".7"/><rect x="2885.3" y="146.8" width="6.5" height="4.5" fill="#fff" stroke="#b8c0c6" stroke-width=".7"/><rect x="2893.4" y="146.8" width="6.5" height="4.5" fill="#3f8fdc" stroke="#2f7cc8" stroke-width=".7"/><rect x="2901.4" y="146.8" width="6.5" height="4.5" fill="#3f8fdc" stroke="#2f7cc8" stroke-width=".7"/><rect x="2909.5" y="146.8" width="6.5" height="4.5" fill="#3f8fdc" stroke="#2f7cc8" stroke-width=".7"/><rect x="2917.5" y="146.8" width="6.5" height="4.5" fill="#fff" stroke="#b8c0c6" stroke-width=".7"/><rect x="2925.6" y="146.8" width="6.5" height="4.5" fill="#fff" stroke="#b8c0c6" stroke-width=".7"/><rect x="2933.6" y="146.8" width="6.5" height="4.5" fill="#fff" stroke="#b8c0c6" stroke-width=".7"/><rect x="2885.3" y="152.8" width="6.5" height="4.5" fill="#fff" stroke="#b8c0c6" stroke-width=".7"/><rect x="2893.4" y="152.8" width="6.5" height="4.5" fill="#fff" stroke="#b8c0c6" stroke-width=".7"/><rect x="2901.4" y="152.8" width="6.5" height="4.5" fill="#fff" stroke="#b8c0c6" stroke-width=".7"/><rect x="2909.5" y="152.8" width="6.5" height="4.5" fill="#fff" stroke="#b8c0c6" stroke-width=".7"/><rect x="2917.5" y="152.8" width="6.5" height="4.5" fill="#fff" stroke="#b8c0c6" stroke-width=".7"/><rect x="2925.6" y="152.8" width="6.5" height="4.5" fill="#fff" stroke="#b8c0c6" stroke-width=".7"/><rect x="2933.6" y="152.8" width="6.5" height="4.5" fill="#fff" stroke="#b8c0c6" stroke-width=".7"/><rect x="2885.3" y="158.8" width="6.5" height="4.5" fill="#fff" stroke="#b8c0c6" stroke-width=".7"/><rect x="2893.4" y="158.8" width="6.5" height="4.5" fill="#fff" stroke="#b8c0c6" stroke-width=".7"/><rect x="2901.4" y="158.8" width="6.5" height="4.5" fill="#fff" stroke="#b8c0c6" stroke-width=".7"/><rect x="2909.5" y="158.8" width="6.5" height="4.5" fill="#fff" stroke="#b8c0c6" stroke-width=".7"/><rect x="2917.5" y="158.8" width="6.5" height="4.5" fill="#fff" stroke="#b8c0c6" stroke-width=".7"/><rect x="2925.6" y="158.8" width="6.5" height="4.5" fill="#fff" stroke="#b8c0c6" stroke-width=".7"/><rect x="2933.6" y="158.8" width="6.5" height="4.5" fill="#fff" stroke="#b8c0c6" stroke-width=".7"/><rect x="2885.3" y="164.7" width="6.5" height="4.5" fill="#fff" stroke="#b8c0c6" stroke-width=".7"/><rect x="2893.4" y="164.7" width="6.5" height="4.5" fill="#fff" stroke="#b8c0c6" stroke-width=".7"/><rect x="2901.4" y="164.7" width="6.5" height="4.5" fill="#fff" stroke="#b8c0c6" stroke-width=".7"/><rect x="2909.5" y="164.7" width="6.5" height="4.5" fill="#fff" stroke="#b8c0c6" stroke-width=".7"/><rect x="2917.5" y="164.7" width="6.5" height="4.5" fill="#fff" stroke="#b8c0c6" stroke-width=".7"/><rect x="2925.6" y="164.7" width="6.5" height="4.5" fill="#fff" stroke="#b8c0c6" stroke-width=".7"/><rect x="2933.6" y="164.7" width="6.5" height="4.5" fill="#fff" stroke="#b8c0c6" stroke-width=".7"/></svg>
<div style="position:absolute;left:1071.0px;top:293.0px;width:589.0px;height:116.5px;border:2px solid #b0c0d2;border-radius:4px;background:linear-gradient(#fdfeff 0%,#eef3fa 45%,#dfe7f4 100%);box-shadow:7px 7px 6px -1px rgba(0,0,0,.45);"></div>
<div class="t" style="left:1083.7px;top:309.4px;font-size:22px;color:#5e5e5e;font-weight:bold;">Nach Excel exportieren (Strg + E, X)</div>
<div class="t" style="left:1099.6px;top:352.0px;font-size:22px;color:#767676;">Exportiert das Abfrageergebnis nach Excel in eine</div>
<div class="t" style="left:1099.6px;top:378.9px;font-size:22px;color:#767676;">csv-Datei</div>
</body></html>
